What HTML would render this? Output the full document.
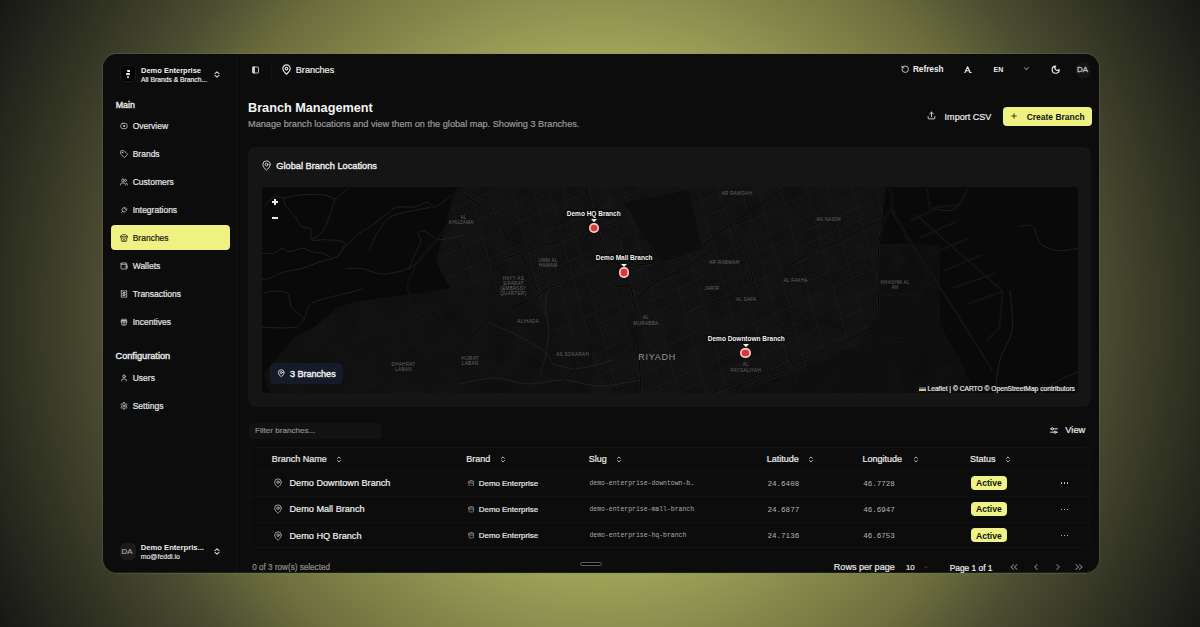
<!DOCTYPE html>
<html><head><meta charset="utf-8"><title>Branch Management</title>
<style>
html,body{margin:0;padding:0;width:1200px;height:627px;overflow:hidden}
body{position:relative;font-family:"Liberation Sans",sans-serif;
background:radial-gradient(circle at 600px 313px, #a3a95b 0px, #9ea458 260px, #8d904f 313px, #6c6e3d 420px, #4a4b30 500px, #2c2e20 600px, #161615 680px);}
.b{position:absolute;display:block}
.t{position:absolute;white-space:nowrap;-webkit-text-stroke:0.2px currentColor}
#win{position:absolute;left:103px;top:54px;width:996px;height:518.5px;border-radius:14px;overflow:hidden;background:#0c0c0c;box-shadow:0 0 0 1px rgba(130,130,120,0.22)}
#inner{position:absolute;left:-103px;top:-54px;width:1200px;height:627px}
</style></head><body>
<div id="win"><div id="inner">
<div class="b" style="left:103px;top:54px;width:996px;height:518px;background:#0c0c0c;border-radius:14px;box-shadow:0 0 0 1px rgba(90,90,60,0.25);overflow:hidden"></div>
<div class="b" style="left:236px;top:54px;width:1px;height:518px;background:#151515"></div>
<div class="b" style="left:120.5px;top:65.5px;width:14.699999999999989px;height:15.099999999999994px;background:#030303;border-radius:4px;box-shadow:0 0 0 1px #191919"></div>
<div class="b" style="left:126.8px;top:69.9px;width:3.700000000000003px;height:2.0999999999999943px;background:#f2f2f2;border-radius:1px 0.6px 0.6px 1.4px"></div>
<div class="b" style="left:125.5px;top:73px;width:4.800000000000011px;height:2.200000000000003px;background:#f2f2f2;border-radius:0.8px"></div>
<div class="b" style="left:126.5px;top:76.2px;width:2.1999999999999886px;height:2.200000000000003px;background:#f2f2f2;border-radius:50%"></div>
<div class="t" style="left:141.00px;top:67.25px;font-size:7.5px;line-height:7.5px;color:#f0f0f0;font-weight:bold;font-family:'Liberation Sans';-webkit-text-stroke:0;">Demo Enterprise</div>
<div class="t" style="left:141.00px;top:76.69px;font-size:6.75px;line-height:6.75px;color:#e6e6e6;font-weight:normal;font-family:'Liberation Sans';">All Brands &amp; Branch...</div>
<svg class="b" style="left:213.7px;top:71px;" width="6" height="7" viewBox="0 0 6 7" fill="none" stroke="#d6d6d6" stroke-width="1.1" stroke-linecap="round" stroke-linejoin="round"><path d="M1 2.6 L3 0.8 L5 2.6 M1 4.4 L3 6.2 L5 4.4"/></svg>
<div class="t" style="left:115.70px;top:100.77px;font-size:8.9px;line-height:8.9px;color:#e6e6e6;font-weight:normal;font-family:'Liberation Sans';-webkit-text-stroke:0.4px #e6e6e6">Main</div>
<svg class="b" style="left:119.5px;top:122.30000000000001px;" width="8" height="8" viewBox="0 0 24 24" fill="none" stroke="#d8d8d8" stroke-width="2.2" stroke-linecap="round" stroke-linejoin="round"><rect x="2.5" y="4" width="19" height="16" rx="6"/><circle cx="12.5" cy="12" r="3" fill="#d8d8d8" stroke="none"/></svg>
<div class="t" style="left:132.70px;top:122.30px;font-size:8.5px;line-height:8.5px;color:#e6e6e6;font-weight:normal;font-family:'Liberation Sans';">Overview</div>
<svg class="b" style="left:119.5px;top:150.20000000000002px;" width="8" height="8" viewBox="0 0 24 24" fill="none" stroke="#d8d8d8" stroke-width="2.2" stroke-linecap="round" stroke-linejoin="round"><path d="M12.6 2.6A2 2 0 0 0 11.2 2H4a2 2 0 0 0-2 2v7.2a2 2 0 0 0 .6 1.4l8.7 8.7a2.4 2.4 0 0 0 3.4 0l6.6-6.6a2.4 2.4 0 0 0 0-3.4z"/><circle cx="7.5" cy="7.5" r="1"/></svg>
<div class="t" style="left:132.70px;top:150.20px;font-size:8.5px;line-height:8.5px;color:#e6e6e6;font-weight:normal;font-family:'Liberation Sans';">Brands</div>
<svg class="b" style="left:119.5px;top:178.1px;" width="8" height="8" viewBox="0 0 24 24" fill="none" stroke="#d8d8d8" stroke-width="2.2" stroke-linecap="round" stroke-linejoin="round"><path d="M16 21v-2a4 4 0 0 0-4-4H6a4 4 0 0 0-4 4v2"/><circle cx="9" cy="7" r="4"/><path d="M22 21v-2a4 4 0 0 0-3-3.9"/><path d="M16 3.1a4 4 0 0 1 0 7.8"/></svg>
<div class="t" style="left:132.70px;top:178.10px;font-size:8.5px;line-height:8.5px;color:#e6e6e6;font-weight:normal;font-family:'Liberation Sans';">Customers</div>
<svg class="b" style="left:119.5px;top:206.0px;" width="8" height="8" viewBox="0 0 24 24" fill="none" stroke="#d8d8d8" stroke-width="2.2" stroke-linecap="round" stroke-linejoin="round"><g transform="rotate(45 12 12)"><path d="M12 22v-5"/><path d="M9 8V3"/><path d="M15 8V3"/><path d="M18 8v5a4 4 0 0 1-4 4h-4a4 4 0 0 1-4-4V8Z"/></g></svg>
<div class="t" style="left:132.70px;top:206.00px;font-size:8.5px;line-height:8.5px;color:#e6e6e6;font-weight:normal;font-family:'Liberation Sans';">Integrations</div>
<div class="b" style="left:111px;top:225px;width:119px;height:25px;background:#eff183;border-radius:4px"></div>
<svg class="b" style="left:119.5px;top:233.9px;" width="8" height="8" viewBox="0 0 24 24" fill="none" stroke="#2a2a18" stroke-width="2.2" stroke-linecap="round" stroke-linejoin="round"><path d="m2 7 4.4-4.4A2 2 0 0 1 7.8 2h8.4a2 2 0 0 1 1.4.6L22 7"/><path d="M4 12v8a2 2 0 0 0 2 2h12a2 2 0 0 0 2-2v-8"/><path d="M15 22v-4a2 2 0 0 0-2-2h-2a2 2 0 0 0-2 2v4"/><path d="M2 7h20"/><path d="M22 7v3a2 2 0 0 1-2 2a2.7 2.7 0 0 1-1.6-.6.7.7 0 0 0-.8 0A2.7 2.7 0 0 1 16 12a2.7 2.7 0 0 1-1.6-.6.7.7 0 0 0-.8 0A2.7 2.7 0 0 1 12 12a2.7 2.7 0 0 1-1.6-.6.7.7 0 0 0-.8 0A2.7 2.7 0 0 1 8 12a2.7 2.7 0 0 1-1.6-.6.7.7 0 0 0-.8 0A2.7 2.7 0 0 1 4 12a2 2 0 0 1-2-2V7"/></svg>
<div class="t" style="left:132.70px;top:233.90px;font-size:8.5px;line-height:8.5px;color:#1a1a10;font-weight:normal;font-family:'Liberation Sans';">Branches</div>
<svg class="b" style="left:119.5px;top:261.79999999999995px;" width="8" height="8" viewBox="0 0 24 24" fill="none" stroke="#d8d8d8" stroke-width="2.2" stroke-linecap="round" stroke-linejoin="round"><path d="M19 7V4a1 1 0 0 0-1-1H5a2 2 0 0 0 0 4h15a1 1 0 0 1 1 1v4h-3a2 2 0 0 0 0 4h3a1 1 0 0 0 1-1v-2a1 1 0 0 0-1-1"/><path d="M3 5v14a2 2 0 0 0 2 2h15a1 1 0 0 0 1-1v-4"/></svg>
<div class="t" style="left:132.70px;top:261.80px;font-size:8.5px;line-height:8.5px;color:#e6e6e6;font-weight:normal;font-family:'Liberation Sans';">Wallets</div>
<svg class="b" style="left:119.5px;top:289.69999999999993px;" width="8" height="8" viewBox="0 0 24 24" fill="none" stroke="#d8d8d8" stroke-width="2.2" stroke-linecap="round" stroke-linejoin="round"><path d="M4 2v20l2-1 2 1 2-1 2 1 2-1 2 1 2-1 2 1V2l-2 1-2-1-2 1-2-1-2 1-2-1-2 1Z"/><path d="M16 8h-6a2 2 0 1 0 0 4h4a2 2 0 1 1 0 4H8"/><path d="M12 17.5v-11"/></svg>
<div class="t" style="left:132.70px;top:289.70px;font-size:8.5px;line-height:8.5px;color:#e6e6e6;font-weight:normal;font-family:'Liberation Sans';">Transactions</div>
<svg class="b" style="left:119.5px;top:317.59999999999997px;" width="8" height="8" viewBox="0 0 24 24" fill="none" stroke="#d8d8d8" stroke-width="2.2" stroke-linecap="round" stroke-linejoin="round"><rect x="3" y="8" width="18" height="4" rx="1"/><path d="M12 8v13"/><path d="M19 12v7a2 2 0 0 1-2 2H7a2 2 0 0 1-2-2v-7"/><path d="M7.5 8a2.5 2.5 0 0 1 0-5A4.8 8 0 0 1 12 8a4.8 8 0 0 1 4.5-5 2.5 2.5 0 0 1 0 5"/></svg>
<div class="t" style="left:132.70px;top:317.60px;font-size:8.5px;line-height:8.5px;color:#e6e6e6;font-weight:normal;font-family:'Liberation Sans';">Incentives</div>
<div class="t" style="left:115.50px;top:352.01px;font-size:9.2px;line-height:9.2px;color:#e6e6e6;font-weight:normal;font-family:'Liberation Sans';-webkit-text-stroke:0.4px #e6e6e6">Configuration</div>
<svg class="b" style="left:119.5px;top:373.59999999999997px;" width="8" height="8" viewBox="0 0 24 24" fill="none" stroke="#d8d8d8" stroke-width="2.2" stroke-linecap="round" stroke-linejoin="round"><path d="M19 21v-2a4 4 0 0 0-4-4H9a4 4 0 0 0-4 4v2"/><circle cx="12" cy="7" r="4"/></svg>
<div class="t" style="left:132.70px;top:373.60px;font-size:8.5px;line-height:8.5px;color:#e6e6e6;font-weight:normal;font-family:'Liberation Sans';">Users</div>
<svg class="b" style="left:119.5px;top:401.59999999999997px;" width="8" height="8" viewBox="0 0 24 24" fill="none" stroke="#d8d8d8" stroke-width="2.2" stroke-linecap="round" stroke-linejoin="round"><path d="M12.22 2h-.44a2 2 0 0 0-2 2v.18a2 2 0 0 1-1 1.73l-.43.25a2 2 0 0 1-2 0l-.15-.08a2 2 0 0 0-2.73.73l-.22.38a2 2 0 0 0 .73 2.73l.15.1a2 2 0 0 1 1 1.72v.51a2 2 0 0 1-1 1.74l-.15.09a2 2 0 0 0-.73 2.73l.22.38a2 2 0 0 0 2.73.73l.15-.08a2 2 0 0 1 2 0l.43.25a2 2 0 0 1 1 1.73V20a2 2 0 0 0 2 2h.44a2 2 0 0 0 2-2v-.18a2 2 0 0 1 1-1.73l.43-.25a2 2 0 0 1 2 0l.15.08a2 2 0 0 0 2.73-.73l.22-.39a2 2 0 0 0-.73-2.73l-.15-.08a2 2 0 0 1-1-1.74v-.5a2 2 0 0 1 1-1.74l.15-.09a2 2 0 0 0 .73-2.73l-.22-.38a2 2 0 0 0-2.73-.73l-.15.08a2 2 0 0 1-2 0l-.43-.25a2 2 0 0 1-1-1.73V4a2 2 0 0 0-2-2z"/><circle cx="12" cy="12" r="3"/></svg>
<div class="t" style="left:132.70px;top:401.60px;font-size:8.5px;line-height:8.5px;color:#e6e6e6;font-weight:normal;font-family:'Liberation Sans';">Settings</div>
<div class="b" style="left:120px;top:543px;width:16px;height:17px;background:#1a1a1a;border-radius:5px"></div>
<div class="t" style="left:121.50px;top:548.41px;font-size:7.9px;line-height:7.9px;color:#a8a8a8;font-weight:normal;font-family:'Liberation Sans';">DA</div>
<div class="t" style="left:140.70px;top:544.42px;font-size:7.65px;line-height:7.65px;color:#ededed;font-weight:bold;font-family:'Liberation Sans';-webkit-text-stroke:0;">Demo Enterpris...</div>
<div class="t" style="left:140.70px;top:553.39px;font-size:6.98px;line-height:6.98px;color:#e0e0e0;font-weight:normal;font-family:'Liberation Sans';-webkit-text-stroke:0.15px #e0e0e0">mo@feddi.io</div>
<svg class="b" style="left:213.7px;top:548px;" width="6" height="7" viewBox="0 0 6 7" fill="none" stroke="#d6d6d6" stroke-width="1.1" stroke-linecap="round" stroke-linejoin="round"><path d="M1 2.6 L3 0.8 L5 2.6 M1 4.4 L3 6.2 L5 4.4"/></svg>
<svg class="b" style="left:250.5px;top:65.5px;" width="9" height="8" viewBox="0 0 24 24" fill="none" stroke="#d8d8d8" stroke-width="2.6" stroke-linecap="round" stroke-linejoin="round"><rect x="3" y="3" width="18" height="18" rx="2"/><path d="M9 3v18"/><rect x="3" y="3" width="6" height="18" fill="#cfcfcf" stroke="none"/></svg>
<div class="b" style="left:271px;top:63px;width:1px;height:16px;background:#151515"></div>
<svg class="b" style="left:280.5px;top:63.8px;" width="11" height="11" viewBox="0 0 24 24" fill="none" stroke="#e8e8e8" stroke-width="2.4" stroke-linecap="round" stroke-linejoin="round"><path d="M20 10c0 4.99-5.54 10.19-7.4 11.8a1 1 0 0 1-1.2 0C9.54 20.19 4 14.99 4 10a8 8 0 0 1 16 0"/><circle cx="12" cy="10" r="3"/></svg>
<div class="t" style="left:295.80px;top:65.90px;font-size:9.1px;line-height:9.1px;color:#ececec;font-weight:normal;font-family:'Liberation Sans';">Branches</div>
<svg class="b" style="left:900.5px;top:65.3px;" width="8.5" height="8.5" viewBox="0 0 24 24" fill="none" stroke="#e0e0e0" stroke-width="2.4" stroke-linecap="round" stroke-linejoin="round"><path d="M3 12a9 9 0 1 0 9-9 9.75 9.75 0 0 0-6.74 2.74L3 8"/><path d="M3 3v5h5"/></svg>
<div class="t" style="left:912.90px;top:66.02px;font-size:8.24px;line-height:8.24px;color:#f0f0f0;font-weight:bold;font-family:'Liberation Sans';-webkit-text-stroke:0;">Refresh</div>
<svg class="b" style="left:964.2px;top:65.6px;" width="8" height="7.6" viewBox="0 0 8 7.6" fill="none" stroke="#ececec" stroke-width="1.1" stroke-linecap="round" stroke-linejoin="round"><path d="M0.8 7 L3.6 0.7 L6.4 7"/><path d="M1.9 4.7 H5.3"/><path d="M5.6 6.9 H7.4"/></svg>
<div class="t" style="left:993.60px;top:66.27px;font-size:7.0px;line-height:7.0px;color:#ececec;font-weight:bold;font-family:'Liberation Sans';-webkit-text-stroke:0;">EN</div>
<svg class="b" style="left:1024px;top:67.2px;" width="5" height="3.6" viewBox="0 0 5 3.6" fill="none" stroke="#7a7a7a" stroke-width="1.1" stroke-linecap="round" stroke-linejoin="round"><path d="M0.6 0.6 L2.5 2.7 L4.4 0.6"/></svg>
<svg class="b" style="left:1051.2px;top:64.8px;" width="9.4" height="9.4" viewBox="0 0 24 24" fill="none" stroke="#e8e8e8" stroke-width="3" stroke-linecap="round" stroke-linejoin="round"><path d="M12 3a6 6 0 0 0 9 9 9 9 0 1 1-9-9Z"/></svg>
<div class="b" style="left:1074.5px;top:61.5px;width:16.5px;height:17.0px;background:#151515;border-radius:50%"></div>
<div class="t" style="left:1077.00px;top:65.71px;font-size:7.9px;line-height:7.9px;color:#c4c4c4;font-weight:normal;font-family:'Liberation Sans';-webkit-text-stroke:0.3px #c4c4c4">DA</div>
<div class="t" style="left:248.00px;top:102.35px;font-size:12.7px;line-height:12.7px;color:#f4f4f4;font-weight:bold;font-family:'Liberation Sans';-webkit-text-stroke:0;">Branch Management</div>
<div class="t" style="left:248.00px;top:120.02px;font-size:9.19px;line-height:9.19px;color:#9a9a9a;font-weight:normal;font-family:'Liberation Sans';">Manage branch locations and view them on the global map. Showing 3 Branches.</div>
<svg class="b" style="left:927px;top:111px;" width="9" height="9" viewBox="0 0 24 24" fill="none" stroke="#e0e0e0" stroke-width="2.4" stroke-linecap="round" stroke-linejoin="round"><path d="M12 3v12"/><path d="m17 8-5-5-5 5"/><path d="M21 15v4a2 2 0 0 1-2 2H5a2 2 0 0 1-2-2v-4"/></svg>
<div class="t" style="left:944.60px;top:112.95px;font-size:9.04px;line-height:9.04px;color:#ececec;font-weight:normal;font-family:'Liberation Sans';">Import CSV</div>
<div class="b" style="left:1003px;top:107px;width:89px;height:19px;background:#eff183;border-radius:4px"></div>
<svg class="b" style="left:1009.5px;top:112px;" width="8" height="8" viewBox="0 0 24 24" fill="none" stroke="#1a1a10" stroke-width="2.4" stroke-linecap="round" stroke-linejoin="round"><path d="M5 12h14"/><path d="M12 5v14"/></svg>
<div class="t" style="left:1026.70px;top:113.42px;font-size:8.48px;line-height:8.48px;color:#141410;font-weight:bold;font-family:'Liberation Sans';-webkit-text-stroke:0;">Create Branch</div>
<div class="b" style="left:248px;top:147px;width:843px;height:259.5px;background:#151515;border-radius:8px"></div>
<svg class="b" style="left:261px;top:160px;" width="11" height="11" viewBox="0 0 24 24" fill="none" stroke="#e0e0e0" stroke-width="2" stroke-linecap="round" stroke-linejoin="round"><path d="M20 10c0 4.99-5.54 10.19-7.4 11.8a1 1 0 0 1-1.2 0C9.54 20.19 4 14.99 4 10a8 8 0 0 1 16 0"/><circle cx="12" cy="10" r="3"/></svg>
<div class="t" style="left:276.30px;top:161.98px;font-size:9.24px;line-height:9.24px;color:#f0f0f0;font-weight:normal;font-family:'Liberation Sans';-webkit-text-stroke:0.35px #f0f0f0">Global Branch Locations</div>
<svg class="b" style="left:0;top:0" width="1200" height="627" viewBox="0 0 1200 627"><defs><clipPath id="core"><path d="M462.0 187.0 L886.0 187.0 L880.0 236.0 L878.0 315.0 L860.0 344.0 L800.0 370.0 L740.0 393.0 L590.0 393.0 L592.0 345.0 L555.0 332.0 L535.0 305.0 L505.0 292.0 L450.0 288.0 L436.0 262.0 L446.0 226.0 L453.0 199.0 Z"/></clipPath><clipPath id="band"><path d="M264.0 374.0 L275.4 359.7 L294.2 337.5 L316.4 325.6 L338.6 306.8 L355.7 301.7 L379.6 298.2 L408.6 294.8 L450.0 288.0 L505.0 292.0 L535.0 305.0 L555.0 332.0 L592.0 345.0 L590.0 393.0 L270.0 393.0 Z"/></clipPath><clipPath id="mapc"><rect x="262" y="187" width="816" height="206" rx="4"/></clipPath><filter id="bl" x="-50%" y="-50%" width="200%" height="200%"><feGaussianBlur stdDeviation="2"/></filter></defs><g clip-path="url(#mapc)"><rect x="262" y="187" width="816" height="206" fill="#090909"/><path d="M264.0 374.0 L275.4 359.7 L294.2 337.5 L316.4 325.6 L338.6 306.8 L355.7 301.7 L379.6 298.2 L408.6 294.8 L450.0 288.0 L505.0 292.0 L535.0 305.0 L555.0 332.0 L592.0 345.0 L590.0 393.0 L270.0 393.0 Z" fill="#101010"/><clipPath id="rg"><path d="M878.0 245.0 L940.0 245.0 L940.0 325.0 L960.0 360.0 L975.0 393.0 L740.0 393.0 L800.0 370.0 L860.0 344.0 L870.0 325.0 Z"/></clipPath><path d="M462.0 187.0 L886.0 187.0 L880.0 236.0 L878.0 315.0 L860.0 344.0 L800.0 370.0 L740.0 393.0 L590.0 393.0 L592.0 345.0 L555.0 332.0 L535.0 305.0 L505.0 292.0 L450.0 288.0 L436.0 262.0 L446.0 226.0 L453.0 199.0 Z" fill="#131313"/><filter id="nz" x="0" y="0" width="100%" height="100%" color-interpolation-filters="sRGB"><feTurbulence type="fractalNoise" baseFrequency="0.9" numOctaves="2" seed="5" result="n1"/><feTurbulence type="fractalNoise" baseFrequency="0.045" numOctaves="2" seed="11" result="n2"/><feComposite in="n1" in2="n2" operator="arithmetic" k1="0" k2="0.55" k3="0.45" k4="0"/><feColorMatrix type="matrix" values="0.075 0 0 0 0.028  0.075 0 0 0 0.028  0.075 0 0 0 0.028  0 0 0 0 1"/></filter><g clip-path="url(#core)"><rect x="262" y="187" width="816" height="206" filter="url(#nz)"/></g><g clip-path="url(#band)" opacity="0.85"><rect x="262" y="187" width="816" height="206" filter="url(#nz)"/></g><g clip-path="url(#rg)" opacity="0.8"><rect x="262" y="187" width="816" height="206" filter="url(#nz)"/></g><path clip-path="url(#rg)" d="M262 -53.0L1078 -54.4M262 -49.0L1078 -50.4M262 -45.0L1078 -46.4M262 -41.0L1078 -42.4M262 -37.0L1078 -38.4M262 -33.0L1078 -34.4M262 -29.0L1078 -30.4M262 -25.0L1078 -26.4M262 -21.0L1078 -22.4M262 -17.0L1078 -18.4M262 -13.0L1078 -14.4M262 -9.0L1078 -10.4M262 -5.0L1078 -6.4M262 -1.0L1078 -2.4M262 3.0L1078 1.6M262 7.0L1078 5.6M262 11.0L1078 9.6M262 15.0L1078 13.6M262 19.0L1078 17.6M262 23.0L1078 21.6M262 27.0L1078 25.6M262 31.0L1078 29.6M262 35.0L1078 33.6M262 39.0L1078 37.6M262 43.0L1078 41.6M262 47.0L1078 45.6M262 51.0L1078 49.6M262 55.0L1078 53.6M262 59.0L1078 57.6M262 63.0L1078 61.6M262 67.0L1078 65.6M262 71.0L1078 69.6M262 75.0L1078 73.6M262 79.0L1078 77.6M262 83.0L1078 81.6M262 87.0L1078 85.6M262 91.0L1078 89.6M262 95.0L1078 93.6M262 99.0L1078 97.6M262 103.0L1078 101.6M262 107.0L1078 105.6M262 111.0L1078 109.6M262 115.0L1078 113.6M262 119.0L1078 117.6M262 123.0L1078 121.6M262 127.0L1078 125.6M262 131.0L1078 129.6M262 135.0L1078 133.6M262 139.0L1078 137.6M262 143.0L1078 141.6M262 147.0L1078 145.6M262 151.0L1078 149.6M262 155.0L1078 153.6M262 159.0L1078 157.6M262 163.0L1078 161.6M262 167.0L1078 165.6M262 171.0L1078 169.6M262 175.0L1078 173.6M262 179.0L1078 177.6M262 183.0L1078 181.6M262 187.0L1078 185.6M262 191.0L1078 189.6M262 195.0L1078 193.6M262 199.0L1078 197.6M262 203.0L1078 201.6M262 207.0L1078 205.6M262 211.0L1078 209.6M262 215.0L1078 213.6M262 219.0L1078 217.6M262 223.0L1078 221.6M262 227.0L1078 225.6M262 231.0L1078 229.6M262 235.0L1078 233.6M262 239.0L1078 237.6M262 243.0L1078 241.6M262 247.0L1078 245.6M262 251.0L1078 249.6M262 255.0L1078 253.6M262 259.0L1078 257.6M262 263.0L1078 261.6M262 267.0L1078 265.6M262 271.0L1078 269.6M262 275.0L1078 273.6M262 279.0L1078 277.6M262 283.0L1078 281.6M262 287.0L1078 285.6M262 291.0L1078 289.6M262 295.0L1078 293.6M262 299.0L1078 297.6M262 303.0L1078 301.6M262 307.0L1078 305.6M262 311.0L1078 309.6M262 315.0L1078 313.6M262 319.0L1078 317.6M262 323.0L1078 321.6M262 327.0L1078 325.6M262 331.0L1078 329.6M262 335.0L1078 333.6M262 339.0L1078 337.6M262 343.0L1078 341.6M262 347.0L1078 345.6M262 351.0L1078 349.6M262 355.0L1078 353.6M262 359.0L1078 357.6M262 363.0L1078 361.6M262 367.0L1078 365.6M262 371.0L1078 369.6M262 375.0L1078 373.6M262 379.0L1078 377.6M262 383.0L1078 381.6M262 387.0L1078 385.6M262 391.0L1078 389.6M262 395.0L1078 393.6M262 399.0L1078 397.6M262 403.0L1078 401.6M262 407.0L1078 405.6M262 411.0L1078 409.6M262 415.0L1078 413.6M262 419.0L1078 417.6M262 423.0L1078 421.6M262 427.0L1078 425.6M262 431.0L1078 429.6M262 435.0L1078 433.6M262 439.0L1078 437.6M262 443.0L1078 441.6M262 447.0L1078 445.6M262 451.0L1078 449.6M262 455.0L1078 453.6M262 459.0L1078 457.6M262 463.0L1078 461.6M262 467.0L1078 465.6M262 471.0L1078 469.6M262 475.0L1078 473.6M262 479.0L1078 477.6M262 483.0L1078 481.6M262 487.0L1078 485.6M262 491.0L1078 489.6M262 495.0L1078 493.6M262 499.0L1078 497.6M262 503.0L1078 501.6M262 507.0L1078 505.6M262 511.0L1078 509.6M262 515.0L1078 513.6M262 519.0L1078 517.6M262 523.0L1078 521.6M262 527.0L1078 525.6M262 531.0L1078 529.6M262 535.0L1078 533.6M262 539.0L1078 537.6M262 543.0L1078 541.6M262 547.0L1078 545.6M262 551.0L1078 549.6M262 555.0L1078 553.6M262 559.0L1078 557.6M262 563.0L1078 561.6M262 567.0L1078 565.6M262 571.0L1078 569.6M262 575.0L1078 573.6M262 579.0L1078 577.6M262 583.0L1078 581.6M262 587.0L1078 585.6M262 591.0L1078 589.6M262 595.0L1078 593.6M262 599.0L1078 597.6M262 603.0L1078 601.6M262 607.0L1078 605.6M262 611.0L1078 609.6M262 615.0L1078 613.6M262 619.0L1078 617.6M262 623.0L1078 621.6M262 627.0L1078 625.6M262 631.0L1078 629.6M262 635.0L1078 633.6M262 639.0L1078 637.6M262 643.0L1078 641.6M262 647.0L1078 645.6M262 651.0L1078 649.6M262 655.0L1078 653.6M262 659.0L1078 657.6M262 663.0L1078 661.6M262 667.0L1078 665.6M262 671.0L1078 669.6M262 675.0L1078 673.6M262 679.0L1078 677.6M262 683.0L1078 681.6M262 687.0L1078 685.6M262 691.0L1078 689.6M262 695.0L1078 693.6M262 699.0L1078 697.6M262 703.0L1078 701.6M262 707.0L1078 705.6M262 711.0L1078 709.6M262 715.0L1078 713.6M262 719.0L1078 717.6M262 723.0L1078 721.6M262 727.0L1078 725.6M262 731.0L1078 729.6M262 735.0L1078 733.6M262 739.0L1078 737.6M262 743.0L1078 741.6M102.0 187L102.4 393M106.0 187L106.4 393M110.0 187L110.4 393M114.0 187L114.4 393M118.0 187L118.4 393M122.0 187L122.4 393M126.0 187L126.4 393M130.0 187L130.4 393M134.0 187L134.4 393M138.0 187L138.4 393M142.0 187L142.4 393M146.0 187L146.4 393M150.0 187L150.4 393M154.0 187L154.4 393M158.0 187L158.4 393M162.0 187L162.4 393M166.0 187L166.4 393M170.0 187L170.4 393M174.0 187L174.4 393M178.0 187L178.4 393M182.0 187L182.4 393M186.0 187L186.4 393M190.0 187L190.4 393M194.0 187L194.4 393M198.0 187L198.4 393M202.0 187L202.4 393M206.0 187L206.4 393M210.0 187L210.4 393M214.0 187L214.4 393M218.0 187L218.4 393M222.0 187L222.4 393M226.0 187L226.4 393M230.0 187L230.4 393M234.0 187L234.4 393M238.0 187L238.4 393M242.0 187L242.4 393M246.0 187L246.4 393M250.0 187L250.4 393M254.0 187L254.4 393M258.0 187L258.4 393M262.0 187L262.4 393M266.0 187L266.4 393M270.0 187L270.4 393M274.0 187L274.4 393M278.0 187L278.4 393M282.0 187L282.4 393M286.0 187L286.4 393M290.0 187L290.4 393M294.0 187L294.4 393M298.0 187L298.4 393M302.0 187L302.4 393M306.0 187L306.4 393M310.0 187L310.4 393M314.0 187L314.4 393M318.0 187L318.4 393M322.0 187L322.4 393M326.0 187L326.4 393M330.0 187L330.4 393M334.0 187L334.4 393M338.0 187L338.4 393M342.0 187L342.4 393M346.0 187L346.4 393M350.0 187L350.4 393M354.0 187L354.4 393M358.0 187L358.4 393M362.0 187L362.4 393M366.0 187L366.4 393M370.0 187L370.4 393M374.0 187L374.4 393M378.0 187L378.4 393M382.0 187L382.4 393M386.0 187L386.4 393M390.0 187L390.4 393M394.0 187L394.4 393M398.0 187L398.4 393M402.0 187L402.4 393M406.0 187L406.4 393M410.0 187L410.4 393M414.0 187L414.4 393M418.0 187L418.4 393M422.0 187L422.4 393M426.0 187L426.4 393M430.0 187L430.4 393M434.0 187L434.4 393M438.0 187L438.4 393M442.0 187L442.4 393M446.0 187L446.4 393M450.0 187L450.4 393M454.0 187L454.4 393M458.0 187L458.4 393M462.0 187L462.4 393M466.0 187L466.4 393M470.0 187L470.4 393M474.0 187L474.4 393M478.0 187L478.4 393M482.0 187L482.4 393M486.0 187L486.4 393M490.0 187L490.4 393M494.0 187L494.4 393M498.0 187L498.4 393M502.0 187L502.4 393M506.0 187L506.4 393M510.0 187L510.4 393M514.0 187L514.4 393M518.0 187L518.4 393M522.0 187L522.4 393M526.0 187L526.4 393M530.0 187L530.4 393M534.0 187L534.4 393M538.0 187L538.4 393M542.0 187L542.4 393M546.0 187L546.4 393M550.0 187L550.4 393M554.0 187L554.4 393M558.0 187L558.4 393M562.0 187L562.4 393M566.0 187L566.4 393M570.0 187L570.4 393M574.0 187L574.4 393M578.0 187L578.4 393M582.0 187L582.4 393M586.0 187L586.4 393M590.0 187L590.4 393M594.0 187L594.4 393M598.0 187L598.4 393M602.0 187L602.4 393M606.0 187L606.4 393M610.0 187L610.4 393M614.0 187L614.4 393M618.0 187L618.4 393M622.0 187L622.4 393M626.0 187L626.4 393M630.0 187L630.4 393M634.0 187L634.4 393M638.0 187L638.4 393M642.0 187L642.4 393M646.0 187L646.4 393M650.0 187L650.4 393M654.0 187L654.4 393M658.0 187L658.4 393M662.0 187L662.4 393M666.0 187L666.4 393M670.0 187L670.4 393M674.0 187L674.4 393M678.0 187L678.4 393M682.0 187L682.4 393M686.0 187L686.4 393M690.0 187L690.4 393M694.0 187L694.4 393M698.0 187L698.4 393M702.0 187L702.4 393M706.0 187L706.4 393M710.0 187L710.4 393M714.0 187L714.4 393M718.0 187L718.4 393M722.0 187L722.4 393M726.0 187L726.4 393M730.0 187L730.4 393M734.0 187L734.4 393M738.0 187L738.4 393M742.0 187L742.4 393M746.0 187L746.4 393M750.0 187L750.4 393M754.0 187L754.4 393M758.0 187L758.4 393M762.0 187L762.4 393M766.0 187L766.4 393M770.0 187L770.4 393M774.0 187L774.4 393M778.0 187L778.4 393M782.0 187L782.4 393M786.0 187L786.4 393M790.0 187L790.4 393M794.0 187L794.4 393M798.0 187L798.4 393M802.0 187L802.4 393M806.0 187L806.4 393M810.0 187L810.4 393M814.0 187L814.4 393M818.0 187L818.4 393M822.0 187L822.4 393M826.0 187L826.4 393M830.0 187L830.4 393M834.0 187L834.4 393M838.0 187L838.4 393M842.0 187L842.4 393M846.0 187L846.4 393M850.0 187L850.4 393M854.0 187L854.4 393M858.0 187L858.4 393M862.0 187L862.4 393M866.0 187L866.4 393M870.0 187L870.4 393M874.0 187L874.4 393M878.0 187L878.4 393M882.0 187L882.4 393M886.0 187L886.4 393M890.0 187L890.4 393M894.0 187L894.4 393M898.0 187L898.4 393" stroke="#161616" stroke-width="0.45" fill="none"/><path clip-path="url(#core)" d="M262 -65.0L1078 -346.0M262 -60.8L1078 -341.8M262 -56.6L1078 -337.6M262 -52.4L1078 -333.4M262 -48.2L1078 -329.2M262 -44.0L1078 -325.0M262 -39.8L1078 -320.8M262 -35.6L1078 -316.6M262 -31.4L1078 -312.4M262 -27.2L1078 -308.2M262 -23.0L1078 -304.0M262 -18.8L1078 -299.8M262 -14.6L1078 -295.6M262 -10.4L1078 -291.4M262 -6.2L1078 -287.2M262 -2.0L1078 -283.0M262 2.2L1078 -278.8M262 6.4L1078 -274.6M262 10.6L1078 -270.4M262 14.8L1078 -266.2M262 19.0L1078 -262.0M262 23.2L1078 -257.8M262 27.4L1078 -253.6M262 31.6L1078 -249.4M262 35.8L1078 -245.2M262 40.0L1078 -241.0M262 44.2L1078 -236.8M262 48.4L1078 -232.6M262 52.6L1078 -228.4M262 56.8L1078 -224.2M262 61.0L1078 -220.0M262 65.2L1078 -215.8M262 69.4L1078 -211.6M262 73.6L1078 -207.4M262 77.8L1078 -203.2M262 82.0L1078 -199.0M262 86.2L1078 -194.8M262 90.4L1078 -190.6M262 94.6L1078 -186.4M262 98.8L1078 -182.2M262 103.0L1078 -178.0M262 107.2L1078 -173.8M262 111.4L1078 -169.6M262 115.6L1078 -165.4M262 119.8L1078 -161.2M262 124.0L1078 -157.0M262 128.2L1078 -152.8M262 132.4L1078 -148.6M262 136.6L1078 -144.4M262 140.8L1078 -140.2M262 145.0L1078 -136.0M262 149.2L1078 -131.8M262 153.4L1078 -127.6M262 157.6L1078 -123.4M262 161.8L1078 -119.2M262 166.0L1078 -115.0M262 170.2L1078 -110.8M262 174.4L1078 -106.6M262 178.6L1078 -102.4M262 182.8L1078 -98.2M262 187.0L1078 -94.0M262 191.2L1078 -89.8M262 195.4L1078 -85.6M262 199.6L1078 -81.4M262 203.8L1078 -77.2M262 208.0L1078 -73.0M262 212.2L1078 -68.8M262 216.4L1078 -64.6M262 220.6L1078 -60.4M262 224.8L1078 -56.2M262 229.0L1078 -52.0M262 233.2L1078 -47.8M262 237.4L1078 -43.6M262 241.6L1078 -39.4M262 245.8L1078 -35.2M262 250.0L1078 -31.0M262 254.2L1078 -26.8M262 258.4L1078 -22.6M262 262.6L1078 -18.4M262 266.8L1078 -14.2M262 271.0L1078 -10.0M262 275.2L1078 -5.8M262 279.4L1078 -1.6M262 283.6L1078 2.6M262 287.8L1078 6.8M262 292.0L1078 11.0M262 296.2L1078 15.2M262 300.4L1078 19.4M262 304.6L1078 23.6M262 308.8L1078 27.8M262 313.0L1078 32.0M262 317.2L1078 36.2M262 321.4L1078 40.4M262 325.6L1078 44.6M262 329.8L1078 48.8M262 334.0L1078 53.0M262 338.2L1078 57.2M262 342.4L1078 61.4M262 346.6L1078 65.6M262 350.8L1078 69.8M262 355.0L1078 74.0M262 359.2L1078 78.2M262 363.4L1078 82.4M262 367.6L1078 86.6M262 371.8L1078 90.8M262 376.0L1078 95.0M262 380.2L1078 99.2M262 384.4L1078 103.4M262 388.6L1078 107.6M262 392.8L1078 111.8M262 397.0L1078 116.0M262 401.2L1078 120.2M262 405.4L1078 124.4M262 409.6L1078 128.6M262 413.8L1078 132.8M262 418.0L1078 137.0M262 422.2L1078 141.2M262 426.4L1078 145.4M262 430.6L1078 149.6M262 434.8L1078 153.8M262 439.0L1078 158.0M262 443.2L1078 162.2M262 447.4L1078 166.4M262 451.6L1078 170.6M262 455.8L1078 174.8M262 460.0L1078 179.0M262 464.2L1078 183.2M262 468.4L1078 187.4M262 472.6L1078 191.6M262 476.8L1078 195.8M262 481.0L1078 200.0M262 485.2L1078 204.2M262 489.4L1078 208.4M262 493.6L1078 212.6M262 497.8L1078 216.8M262 502.0L1078 221.0M262 506.2L1078 225.2M262 510.4L1078 229.4M262 514.6L1078 233.6M262 518.8L1078 237.8M262 523.0L1078 242.0M262 527.2L1078 246.2M262 531.4L1078 250.4M262 535.6L1078 254.6M262 539.8L1078 258.8M262 544.0L1078 263.0M262 548.2L1078 267.2M262 552.4L1078 271.4M262 556.6L1078 275.6M262 560.8L1078 279.8M262 565.0L1078 284.0M262 569.2L1078 288.2M262 573.4L1078 292.4M262 577.6L1078 296.6M262 581.8L1078 300.8M262 586.0L1078 305.0M262 590.2L1078 309.2M262 594.4L1078 313.4M262 598.6L1078 317.6M262 602.8L1078 321.8M262 607.0L1078 326.0M262 611.2L1078 330.2M262 615.4L1078 334.4M262 619.6L1078 338.6M262 623.8L1078 342.8M262 628.0L1078 347.0M262 632.2L1078 351.2M262 636.4L1078 355.4M262 640.6L1078 359.6M262 644.8L1078 363.8M262 649.0L1078 368.0M262 653.2L1078 372.2M262 657.4L1078 376.4M262 661.6L1078 380.6M262 665.8L1078 384.8M262 670.0L1078 389.0M262 674.2L1078 393.2M262 678.4L1078 397.4M262 682.6L1078 401.6M262 686.8L1078 405.8M262 691.0L1078 410.0M262 695.2L1078 414.2M262 699.4L1078 418.4M262 703.6L1078 422.6M262 707.8L1078 426.8M262 712.0L1078 431.0M262 716.2L1078 435.2M262 720.4L1078 439.4M262 724.6L1078 443.6M262 728.8L1078 447.8M262 733.0L1078 452.0M262 737.2L1078 456.2M262 741.4L1078 460.4M262 745.6L1078 464.6M262 749.8L1078 468.8M262 754.0L1078 473.0M262 758.2L1078 477.2M262 762.4L1078 481.4M262 766.6L1078 485.6M262 770.8L1078 489.8M94.0 187L164.9 393M98.2 187L169.1 393M102.4 187L173.3 393M106.6 187L177.5 393M110.8 187L181.7 393M115.0 187L185.9 393M119.2 187L190.1 393M123.4 187L194.3 393M127.6 187L198.5 393M131.8 187L202.7 393M136.0 187L206.9 393M140.2 187L211.1 393M144.4 187L215.3 393M148.6 187L219.5 393M152.8 187L223.7 393M157.0 187L227.9 393M161.2 187L232.1 393M165.4 187L236.3 393M169.6 187L240.5 393M173.8 187L244.7 393M178.0 187L248.9 393M182.2 187L253.1 393M186.4 187L257.3 393M190.6 187L261.5 393M194.8 187L265.7 393M199.0 187L269.9 393M203.2 187L274.1 393M207.4 187L278.3 393M211.6 187L282.5 393M215.8 187L286.7 393M220.0 187L290.9 393M224.2 187L295.1 393M228.4 187L299.3 393M232.6 187L303.5 393M236.8 187L307.7 393M241.0 187L311.9 393M245.2 187L316.1 393M249.4 187L320.3 393M253.6 187L324.5 393M257.8 187L328.7 393M262.0 187L332.9 393M266.2 187L337.1 393M270.4 187L341.3 393M274.6 187L345.5 393M278.8 187L349.7 393M283.0 187L353.9 393M287.2 187L358.1 393M291.4 187L362.3 393M295.6 187L366.5 393M299.8 187L370.7 393M304.0 187L374.9 393M308.2 187L379.1 393M312.4 187L383.3 393M316.6 187L387.5 393M320.8 187L391.7 393M325.0 187L395.9 393M329.2 187L400.1 393M333.4 187L404.3 393M337.6 187L408.5 393M341.8 187L412.7 393M346.0 187L416.9 393M350.2 187L421.1 393M354.4 187L425.3 393M358.6 187L429.5 393M362.8 187L433.7 393M367.0 187L437.9 393M371.2 187L442.1 393M375.4 187L446.3 393M379.6 187L450.5 393M383.8 187L454.7 393M388.0 187L458.9 393M392.2 187L463.1 393M396.4 187L467.3 393M400.6 187L471.5 393M404.8 187L475.7 393M409.0 187L479.9 393M413.2 187L484.1 393M417.4 187L488.3 393M421.6 187L492.5 393M425.8 187L496.7 393M430.0 187L500.9 393M434.2 187L505.1 393M438.4 187L509.3 393M442.6 187L513.5 393M446.8 187L517.7 393M451.0 187L521.9 393M455.2 187L526.1 393M459.4 187L530.3 393M463.6 187L534.5 393M467.8 187L538.7 393M472.0 187L542.9 393M476.2 187L547.1 393M480.4 187L551.3 393M484.6 187L555.5 393M488.8 187L559.7 393M493.0 187L563.9 393M497.2 187L568.1 393M501.4 187L572.3 393M505.6 187L576.5 393M509.8 187L580.7 393M514.0 187L584.9 393M518.2 187L589.1 393M522.4 187L593.3 393M526.6 187L597.5 393M530.8 187L601.7 393M535.0 187L605.9 393M539.2 187L610.1 393M543.4 187L614.3 393M547.6 187L618.5 393M551.8 187L622.7 393M556.0 187L626.9 393M560.2 187L631.1 393M564.4 187L635.3 393M568.6 187L639.5 393M572.8 187L643.7 393M577.0 187L647.9 393M581.2 187L652.1 393M585.4 187L656.3 393M589.6 187L660.5 393M593.8 187L664.7 393M598.0 187L668.9 393M602.2 187L673.1 393M606.4 187L677.3 393M610.6 187L681.5 393M614.8 187L685.7 393M619.0 187L689.9 393M623.2 187L694.1 393M627.4 187L698.3 393M631.6 187L702.5 393M635.8 187L706.7 393M640.0 187L710.9 393M644.2 187L715.1 393M648.4 187L719.3 393M652.6 187L723.5 393M656.8 187L727.7 393M661.0 187L731.9 393M665.2 187L736.1 393M669.4 187L740.3 393M673.6 187L744.5 393M677.8 187L748.7 393M682.0 187L752.9 393M686.2 187L757.1 393M690.4 187L761.3 393M694.6 187L765.5 393M698.8 187L769.7 393M703.0 187L773.9 393M707.2 187L778.1 393M711.4 187L782.3 393M715.6 187L786.5 393M719.8 187L790.7 393M724.0 187L794.9 393M728.2 187L799.1 393M732.4 187L803.3 393M736.6 187L807.5 393M740.8 187L811.7 393M745.0 187L815.9 393M749.2 187L820.1 393M753.4 187L824.3 393M757.6 187L828.5 393M761.8 187L832.7 393M766.0 187L836.9 393M770.2 187L841.1 393M774.4 187L845.3 393M778.6 187L849.5 393M782.8 187L853.7 393M787.0 187L857.9 393M791.2 187L862.1 393M795.4 187L866.3 393M799.6 187L870.5 393M803.8 187L874.7 393M808.0 187L878.9 393M812.2 187L883.1 393M816.4 187L887.3 393M820.6 187L891.5 393M824.8 187L895.7 393M829.0 187L899.9 393M833.2 187L904.1 393M837.4 187L908.3 393M841.6 187L912.5 393M845.8 187L916.7 393M850.0 187L920.9 393M854.2 187L925.1 393M858.4 187L929.3 393M862.6 187L933.5 393M866.8 187L937.7 393M871.0 187L941.9 393M875.2 187L946.1 393M879.4 187L950.3 393M883.6 187L954.5 393M887.8 187L958.7 393M892.0 187L962.9 393M896.2 187L967.1 393M900.4 187L971.3 393M904.6 187L975.5 393M908.8 187L979.7 393M913.0 187L983.9 393M917.2 187L988.1 393M921.4 187L992.3 393M925.6 187L996.5 393M929.8 187L1000.7 393" stroke="#191919" stroke-width="0.45" fill="none"/><path clip-path="url(#core)" d="M447.3 187L503.0 393M469.0 187L524.6 393M488.1 187L543.8 393M510.6 187L566.2 393M533.3 187L589.0 393M548.3 187L603.9 393M562.4 187L618.1 393M588.2 187L643.8 393M605.8 187L661.4 393M623.1 187L678.7 393M651.0 187L706.6 393M671.6 187L727.2 393M697.3 187L752.9 393M718.0 187L773.6 393M740.9 187L796.6 393M757.0 187L812.7 393M779.9 187L835.5 393M806.1 187L861.7 393M827.4 187L883.0 393M851.8 187L907.4 393M875.2 187L930.8 393M890.1 187L945.7 393M914.7 187L970.3 393M262 206.1L1078 -161.1M262 221.7L1078 -145.5M262 234.1L1078 -133.1M262 256.5L1078 -110.7M262 274.1L1078 -93.1M262 294.8L1078 -72.4M262 317.3L1078 -49.9M262 337.9L1078 -29.3M262 360.9L1078 -6.3M262 377.7L1078 10.5M262 399.3L1078 32.1M262 416.6L1078 49.4M262 439.8L1078 72.6M262 462.4L1078 95.2M262 475.6L1078 108.4M262 489.2L1078 122.0M262 503.8L1078 136.6M262 527.4L1078 160.2M262 544.6L1078 177.4M262 564.1L1078 196.9M262 579.8L1078 212.6M262 597.8L1078 230.6M262 614.5L1078 247.3M262 630.7L1078 263.5M262 649.7L1078 282.5M262 668.7L1078 301.5M262 691.6L1078 324.4M262 711.7L1078 344.5M262 734.9L1078 367.7M262 757.2L1078 390.0M262 781.1L1078 413.9M262 801.1L1078 433.9" stroke="#1a1a1a" stroke-width="0.8" fill="none"/><path d="M624 203 L688 190 L702 249 L662 262 Z" fill="#0d0d0d"/><path clip-path="url(#band)" d="M262 7.0L1078 -522.9M262 10.0L1078 -519.9M262 13.0L1078 -516.9M262 16.0L1078 -513.9M262 19.0L1078 -510.9M262 22.0L1078 -507.9M262 25.0L1078 -504.9M262 28.0L1078 -501.9M262 31.0L1078 -498.9M262 34.0L1078 -495.9M262 37.0L1078 -492.9M262 40.0L1078 -489.9M262 43.0L1078 -486.9M262 46.0L1078 -483.9M262 49.0L1078 -480.9M262 52.0L1078 -477.9M262 55.0L1078 -474.9M262 58.0L1078 -471.9M262 61.0L1078 -468.9M262 64.0L1078 -465.9M262 67.0L1078 -462.9M262 70.0L1078 -459.9M262 73.0L1078 -456.9M262 76.0L1078 -453.9M262 79.0L1078 -450.9M262 82.0L1078 -447.9M262 85.0L1078 -444.9M262 88.0L1078 -441.9M262 91.0L1078 -438.9M262 94.0L1078 -435.9M262 97.0L1078 -432.9M262 100.0L1078 -429.9M262 103.0L1078 -426.9M262 106.0L1078 -423.9M262 109.0L1078 -420.9M262 112.0L1078 -417.9M262 115.0L1078 -414.9M262 118.0L1078 -411.9M262 121.0L1078 -408.9M262 124.0L1078 -405.9M262 127.0L1078 -402.9M262 130.0L1078 -399.9M262 133.0L1078 -396.9M262 136.0L1078 -393.9M262 139.0L1078 -390.9M262 142.0L1078 -387.9M262 145.0L1078 -384.9M262 148.0L1078 -381.9M262 151.0L1078 -378.9M262 154.0L1078 -375.9M262 157.0L1078 -372.9M262 160.0L1078 -369.9M262 163.0L1078 -366.9M262 166.0L1078 -363.9M262 169.0L1078 -360.9M262 172.0L1078 -357.9M262 175.0L1078 -354.9M262 178.0L1078 -351.9M262 181.0L1078 -348.9M262 184.0L1078 -345.9M262 187.0L1078 -342.9M262 190.0L1078 -339.9M262 193.0L1078 -336.9M262 196.0L1078 -333.9M262 199.0L1078 -330.9M262 202.0L1078 -327.9M262 205.0L1078 -324.9M262 208.0L1078 -321.9M262 211.0L1078 -318.9M262 214.0L1078 -315.9M262 217.0L1078 -312.9M262 220.0L1078 -309.9M262 223.0L1078 -306.9M262 226.0L1078 -303.9M262 229.0L1078 -300.9M262 232.0L1078 -297.9M262 235.0L1078 -294.9M262 238.0L1078 -291.9M262 241.0L1078 -288.9M262 244.0L1078 -285.9M262 247.0L1078 -282.9M262 250.0L1078 -279.9M262 253.0L1078 -276.9M262 256.0L1078 -273.9M262 259.0L1078 -270.9M262 262.0L1078 -267.9M262 265.0L1078 -264.9M262 268.0L1078 -261.9M262 271.0L1078 -258.9M262 274.0L1078 -255.9M262 277.0L1078 -252.9M262 280.0L1078 -249.9M262 283.0L1078 -246.9M262 286.0L1078 -243.9M262 289.0L1078 -240.9M262 292.0L1078 -237.9M262 295.0L1078 -234.9M262 298.0L1078 -231.9M262 301.0L1078 -228.9M262 304.0L1078 -225.9M262 307.0L1078 -222.9M262 310.0L1078 -219.9M262 313.0L1078 -216.9M262 316.0L1078 -213.9M262 319.0L1078 -210.9M262 322.0L1078 -207.9M262 325.0L1078 -204.9M262 328.0L1078 -201.9M262 331.0L1078 -198.9M262 334.0L1078 -195.9M262 337.0L1078 -192.9M262 340.0L1078 -189.9M262 343.0L1078 -186.9M262 346.0L1078 -183.9M262 349.0L1078 -180.9M262 352.0L1078 -177.9M262 355.0L1078 -174.9M262 358.0L1078 -171.9M262 361.0L1078 -168.9M262 364.0L1078 -165.9M262 367.0L1078 -162.9M262 370.0L1078 -159.9M262 373.0L1078 -156.9M262 376.0L1078 -153.9M262 379.0L1078 -150.9M262 382.0L1078 -147.9M262 385.0L1078 -144.9M262 388.0L1078 -141.9M262 391.0L1078 -138.9M262 394.0L1078 -135.9M262 397.0L1078 -132.9M262 400.0L1078 -129.9M262 403.0L1078 -126.9M262 406.0L1078 -123.9M262 409.0L1078 -120.9M262 412.0L1078 -117.9M262 415.0L1078 -114.9M262 418.0L1078 -111.9M262 421.0L1078 -108.9M262 424.0L1078 -105.9M262 427.0L1078 -102.9M262 430.0L1078 -99.9M262 433.0L1078 -96.9M262 436.0L1078 -93.9M262 439.0L1078 -90.9M262 442.0L1078 -87.9M262 445.0L1078 -84.9M262 448.0L1078 -81.9M262 451.0L1078 -78.9M262 454.0L1078 -75.9M262 457.0L1078 -72.9M262 460.0L1078 -69.9M262 463.0L1078 -66.9M262 466.0L1078 -63.9M262 469.0L1078 -60.9M262 472.0L1078 -57.9M262 475.0L1078 -54.9M262 478.0L1078 -51.9M262 481.0L1078 -48.9M262 484.0L1078 -45.9M262 487.0L1078 -42.9M262 490.0L1078 -39.9M262 493.0L1078 -36.9M262 496.0L1078 -33.9M262 499.0L1078 -30.9M262 502.0L1078 -27.9M262 505.0L1078 -24.9M262 508.0L1078 -21.9M262 511.0L1078 -18.9M262 514.0L1078 -15.9M262 517.0L1078 -12.9M262 520.0L1078 -9.9M262 523.0L1078 -6.9M262 526.0L1078 -3.9M262 529.0L1078 -0.9M262 532.0L1078 2.1M262 535.0L1078 5.1M262 538.0L1078 8.1M262 541.0L1078 11.1M262 544.0L1078 14.1M262 547.0L1078 17.1M262 550.0L1078 20.1M262 553.0L1078 23.1M262 556.0L1078 26.1M262 559.0L1078 29.1M262 562.0L1078 32.1M262 565.0L1078 35.1M262 568.0L1078 38.1M262 571.0L1078 41.1M262 574.0L1078 44.1M262 577.0L1078 47.1M262 580.0L1078 50.1M262 583.0L1078 53.1M262 586.0L1078 56.1M262 589.0L1078 59.1M262 592.0L1078 62.1M262 595.0L1078 65.1M262 598.0L1078 68.1M262 601.0L1078 71.1M262 604.0L1078 74.1M142.0 187L-175.2 393M145.0 187L-172.2 393M148.0 187L-169.2 393M151.0 187L-166.2 393M154.0 187L-163.2 393M157.0 187L-160.2 393M160.0 187L-157.2 393M163.0 187L-154.2 393M166.0 187L-151.2 393M169.0 187L-148.2 393M172.0 187L-145.2 393M175.0 187L-142.2 393M178.0 187L-139.2 393M181.0 187L-136.2 393M184.0 187L-133.2 393M187.0 187L-130.2 393M190.0 187L-127.2 393M193.0 187L-124.2 393M196.0 187L-121.2 393M199.0 187L-118.2 393M202.0 187L-115.2 393M205.0 187L-112.2 393M208.0 187L-109.2 393M211.0 187L-106.2 393M214.0 187L-103.2 393M217.0 187L-100.2 393M220.0 187L-97.2 393M223.0 187L-94.2 393M226.0 187L-91.2 393M229.0 187L-88.2 393M232.0 187L-85.2 393M235.0 187L-82.2 393M238.0 187L-79.2 393M241.0 187L-76.2 393M244.0 187L-73.2 393M247.0 187L-70.2 393M250.0 187L-67.2 393M253.0 187L-64.2 393M256.0 187L-61.2 393M259.0 187L-58.2 393M262.0 187L-55.2 393M265.0 187L-52.2 393M268.0 187L-49.2 393M271.0 187L-46.2 393M274.0 187L-43.2 393M277.0 187L-40.2 393M280.0 187L-37.2 393M283.0 187L-34.2 393M286.0 187L-31.2 393M289.0 187L-28.2 393M292.0 187L-25.2 393M295.0 187L-22.2 393M298.0 187L-19.2 393M301.0 187L-16.2 393M304.0 187L-13.2 393M307.0 187L-10.2 393M310.0 187L-7.2 393M313.0 187L-4.2 393M316.0 187L-1.2 393M319.0 187L1.8 393M322.0 187L4.8 393M325.0 187L7.8 393M328.0 187L10.8 393M331.0 187L13.8 393M334.0 187L16.8 393M337.0 187L19.8 393M340.0 187L22.8 393M343.0 187L25.8 393M346.0 187L28.8 393M349.0 187L31.8 393M352.0 187L34.8 393M355.0 187L37.8 393M358.0 187L40.8 393M361.0 187L43.8 393M364.0 187L46.8 393M367.0 187L49.8 393M370.0 187L52.8 393M373.0 187L55.8 393M376.0 187L58.8 393M379.0 187L61.8 393M382.0 187L64.8 393M385.0 187L67.8 393M388.0 187L70.8 393M391.0 187L73.8 393M394.0 187L76.8 393M397.0 187L79.8 393M400.0 187L82.8 393M403.0 187L85.8 393M406.0 187L88.8 393M409.0 187L91.8 393M412.0 187L94.8 393M415.0 187L97.8 393M418.0 187L100.8 393M421.0 187L103.8 393M424.0 187L106.8 393M427.0 187L109.8 393M430.0 187L112.8 393M433.0 187L115.8 393M436.0 187L118.8 393M439.0 187L121.8 393M442.0 187L124.8 393M445.0 187L127.8 393M448.0 187L130.8 393M451.0 187L133.8 393M454.0 187L136.8 393M457.0 187L139.8 393M460.0 187L142.8 393M463.0 187L145.8 393M466.0 187L148.8 393M469.0 187L151.8 393M472.0 187L154.8 393M475.0 187L157.8 393M478.0 187L160.8 393M481.0 187L163.8 393M484.0 187L166.8 393M487.0 187L169.8 393M490.0 187L172.8 393M493.0 187L175.8 393M496.0 187L178.8 393M499.0 187L181.8 393M502.0 187L184.8 393M505.0 187L187.8 393M508.0 187L190.8 393M511.0 187L193.8 393M514.0 187L196.8 393M517.0 187L199.8 393M520.0 187L202.8 393M523.0 187L205.8 393M526.0 187L208.8 393M529.0 187L211.8 393M532.0 187L214.8 393M535.0 187L217.8 393M538.0 187L220.8 393M541.0 187L223.8 393M544.0 187L226.8 393M547.0 187L229.8 393M550.0 187L232.8 393M553.0 187L235.8 393M556.0 187L238.8 393M559.0 187L241.8 393M562.0 187L244.8 393M565.0 187L247.8 393M568.0 187L250.8 393M571.0 187L253.8 393M574.0 187L256.8 393M577.0 187L259.8 393M580.0 187L262.8 393M583.0 187L265.8 393M586.0 187L268.8 393M589.0 187L271.8 393M592.0 187L274.8 393M595.0 187L277.8 393M598.0 187L280.8 393M601.0 187L283.8 393M604.0 187L286.8 393M607.0 187L289.8 393M610.0 187L292.8 393M613.0 187L295.8 393M616.0 187L298.8 393M619.0 187L301.8 393M622.0 187L304.8 393M625.0 187L307.8 393M628.0 187L310.8 393M631.0 187L313.8 393M634.0 187L316.8 393M637.0 187L319.8 393M640.0 187L322.8 393M643.0 187L325.8 393M646.0 187L328.8 393M649.0 187L331.8 393M652.0 187L334.8 393M655.0 187L337.8 393M658.0 187L340.8 393M661.0 187L343.8 393M664.0 187L346.8 393M667.0 187L349.8 393M670.0 187L352.8 393M673.0 187L355.8 393M676.0 187L358.8 393M679.0 187L361.8 393M682.0 187L364.8 393M685.0 187L367.8 393M688.0 187L370.8 393M691.0 187L373.8 393M694.0 187L376.8 393M697.0 187L379.8 393M700.0 187L382.8 393M703.0 187L385.8 393M706.0 187L388.8 393M709.0 187L391.8 393M712.0 187L394.8 393M715.0 187L397.8 393M718.0 187L400.8 393M721.0 187L403.8 393M724.0 187L406.8 393M727.0 187L409.8 393M730.0 187L412.8 393M733.0 187L415.8 393M736.0 187L418.8 393M739.0 187L421.8 393" stroke="#171717" stroke-width="0.45" fill="none"/><path d="M263.4 207.2 C265.1 205.5 270.3 198.6 273.7 197.0 C277.1 195.4 279.9 198.1 283.9 197.8 C287.9 197.5 293.1 195.8 297.6 195.2 C302.2 194.6 306.6 194.4 311.2 194.4 C315.8 194.4 320.9 194.5 324.9 195.2 C328.9 195.9 332.6 198.7 335.2 198.7 C337.8 198.7 338.0 197.0 340.3 195.2 C342.6 193.3 347.4 188.9 348.8 187.6" stroke="#232323" stroke-width="0.9" fill="none"/><path d="M283.9 197.8 C284.2 199.1 283.6 202.2 285.6 205.5 C287.6 208.8 293.3 214.1 295.9 217.5 C298.5 220.9 298.4 224.0 301.0 226.0 C303.6 228.0 309.5 227.1 311.2 229.4 C312.9 231.7 308.9 238.0 311.2 239.7 C313.5 241.4 319.8 239.4 324.9 239.7 C330.0 240.0 338.9 240.3 342.0 241.4 C345.1 242.5 344.6 243.9 343.7 246.5 C342.8 249.1 340.9 254.1 336.9 256.7 C332.9 259.3 325.8 259.9 319.8 261.9 C313.8 263.9 307.0 267.0 301.0 268.7 C295.0 270.4 289.0 270.5 283.9 272.1 C278.8 273.7 273.9 276.8 270.2 278.1 C266.5 279.4 263.1 279.5 261.7 279.8" stroke="#232323" stroke-width="0.9" fill="none"/><path d="M335.2 198.7 C334.1 202.1 330.6 213.5 328.3 219.2 C326.0 224.9 324.4 229.4 321.5 232.8 C318.6 236.2 312.9 238.5 311.2 239.7" stroke="#232323" stroke-width="0.9" fill="none"/><path d="M261.7 253.3 C263.7 253.3 270.3 254.2 273.7 253.3 C277.1 252.5 279.6 248.5 282.2 248.2 C284.8 247.9 285.6 251.6 289.0 251.6 C292.4 251.6 299.0 248.2 302.7 248.2 C306.4 248.2 307.8 250.8 311.2 251.6 C314.6 252.4 319.8 252.2 323.2 253.3 C326.6 254.5 330.3 257.6 331.7 258.5" stroke="#232323" stroke-width="0.9" fill="none"/><path d="M336.9 256.7 C340.0 253.3 350.0 241.3 355.7 236.2 C361.4 231.1 366.2 229.4 371.0 226.0 C375.8 222.6 380.4 218.8 384.7 215.7 C389.0 212.6 391.9 208.6 396.7 207.2 C401.5 205.8 408.6 208.0 413.7 207.2 C418.8 206.3 424.0 202.1 427.4 202.1 C430.8 202.1 431.6 207.2 434.2 207.2 C436.8 207.2 439.9 204.1 442.8 202.1 C445.7 200.1 449.9 196.3 451.3 195.2" stroke="#232323" stroke-width="0.9" fill="none"/><path d="M369.3 249.9 C371.0 246.5 375.6 235.1 379.6 229.4 C383.6 223.7 384.7 219.4 393.2 215.7 C401.7 212.0 424.5 208.6 430.8 207.2" stroke="#232323" stroke-width="0.9" fill="none"/><path d="M345.4 268.7 C348.2 268.7 356.8 267.8 362.5 268.7 C368.2 269.6 373.9 273.2 379.6 273.8 C385.3 274.4 391.6 273.2 396.7 272.1 C401.8 271.0 406.0 269.3 410.3 267.0 C414.6 264.7 420.3 259.9 422.3 258.5" stroke="#232323" stroke-width="0.9" fill="none"/><path d="M418.9 232.8 C419.8 232.5 421.7 230.5 424.0 231.1 C426.3 231.7 429.6 234.8 432.5 236.2 C435.4 237.6 435.7 240.0 441.1 239.7 C446.5 239.4 461.0 235.4 465.0 234.5" stroke="#232323" stroke-width="0.9" fill="none"/><path d="M417.2 232.8 C417.8 234.2 421.2 237.4 420.6 241.4 C420.0 245.4 415.7 251.9 413.7 256.7 C411.7 261.5 409.5 268.1 408.6 270.4" stroke="#232323" stroke-width="0.9" fill="none"/><path d="M261.7 327.3 C267.1 327.3 287.1 328.7 294.2 327.3 C301.3 325.9 301.8 322.4 304.4 318.7 C306.9 315.0 305.8 308.5 309.5 305.1 C313.2 301.7 319.2 300.5 326.6 298.2 C334.0 295.9 348.0 293.1 354.0 291.4 C360.0 289.7 361.1 288.6 362.5 288.0" stroke="#232323" stroke-width="0.9" fill="none"/><path d="M263.4 293.1 C265.1 292.8 269.7 291.4 273.7 291.4 C277.7 291.4 284.5 290.8 287.3 293.1 C290.1 295.4 289.6 302.2 290.7 305.1 C291.8 308.0 291.9 307.9 294.2 310.2 C296.5 312.5 302.7 317.3 304.4 318.7" stroke="#232323" stroke-width="0.9" fill="none"/><path d="M1020.0 226.8 C1021.2 226.5 1024.9 224.7 1027.3 225.0 C1029.7 225.3 1032.4 225.6 1034.5 228.6 C1036.6 231.6 1036.3 239.5 1040.0 243.2 C1043.7 246.8 1050.1 249.6 1056.4 250.5 C1062.7 251.4 1074.4 248.9 1078.0 248.6" stroke="#232323" stroke-width="0.9" fill="none"/><path d="M969.0 185.0 C967.8 187.7 964.8 197.2 961.8 201.4 C958.8 205.7 955.9 209.3 951.0 210.5 C946.1 211.7 935.8 208.9 932.7 208.6" stroke="#232323" stroke-width="0.9" fill="none"/><path d="M487.3 322.2 C491.3 323.9 502.1 327.8 511.2 332.4 C520.3 336.9 535.5 344.9 542.0 349.5 C548.5 354.1 548.2 357.1 550.5 359.7 C552.8 362.3 550.9 363.5 555.7 364.9 C560.6 366.3 569.9 369.2 579.6 368.3 C589.3 367.4 608.0 361.1 613.7 359.7" stroke="#232323" stroke-width="0.9" fill="none"/><path d="M548.8 288.0 C548.2 290.8 545.4 297.9 545.4 305.0 C545.4 312.1 548.8 322.1 548.8 330.7 C548.8 339.2 546.8 349.2 545.4 356.3 C544.0 363.4 541.1 370.5 540.3 373.4" stroke="#232323" stroke-width="0.9" fill="none"/><path d="M460.0 384.0 C465.7 383.0 482.7 378.0 494.0 378.0 C505.3 378.0 516.7 383.7 528.0 384.0 C539.3 384.3 550.0 379.7 562.0 380.0 C574.0 380.3 587.0 386.0 600.0 386.0 C613.0 386.0 633.3 381.0 640.0 380.0" stroke="#232323" stroke-width="0.9" fill="none"/><path d="M1040.0 393.0 C1043.3 390.8 1053.7 383.5 1060.0 380.0 C1066.3 376.5 1075.0 373.3 1078.0 372.0" stroke="#232323" stroke-width="0.9" fill="none"/><path d="M1010.0 290.0 C1010.3 296.7 1013.7 318.3 1012.0 330.0 C1010.3 341.7 1002.8 349.5 1000.0 360.0 C997.2 370.5 995.8 387.5 995.0 393.0" stroke="#232323" stroke-width="0.9" fill="none"/><path d="M891.5 211.5 L959.5 317.7 L992.7 370.8" stroke="#1c1c1c" stroke-width="1.6" fill="none"/><path d="M891.5 211.5 L959.5 317.7 L992.7 370.8" stroke="#0a0a0a" stroke-width="0.7" fill="none"/><path d="M916.4 214.9 L1002.7 291.2" stroke="#1c1c1c" stroke-width="1.6" fill="none"/><path d="M916.4 214.9 L1002.7 291.2" stroke="#0a0a0a" stroke-width="0.7" fill="none"/><path d="M926.4 185.0 L929.7 208.2 L959.5 204.9 L969.5 185.0" stroke="#1c1c1c" stroke-width="1.6" fill="none"/><path d="M926.4 185.0 L929.7 208.2 L959.5 204.9 L969.5 185.0" stroke="#0a0a0a" stroke-width="0.7" fill="none"/><path d="M1002.7 291.2 L999.3 327.7 L986.1 340.9" stroke="#1c1c1c" stroke-width="1.6" fill="none"/><path d="M1002.7 291.2 L999.3 327.7 L986.1 340.9" stroke="#0a0a0a" stroke-width="0.7" fill="none"/><path d="M879.9 244.7 L913.1 244.7" stroke="#1c1c1c" stroke-width="1.6" fill="none"/><path d="M879.9 244.7 L913.1 244.7" stroke="#0a0a0a" stroke-width="0.7" fill="none"/><path d="M879.9 294.5 L923.0 294.5" stroke="#1c1c1c" stroke-width="1.6" fill="none"/><path d="M879.9 294.5 L923.0 294.5" stroke="#0a0a0a" stroke-width="0.7" fill="none"/><path d="M909.8 221.5 L942.9 204.9" stroke="#1c1c1c" stroke-width="1.6" fill="none"/><path d="M909.8 221.5 L942.9 204.9" stroke="#0a0a0a" stroke-width="0.7" fill="none"/><path d="M919.7 238.1 L956.2 221.5" stroke="#1c1c1c" stroke-width="1.6" fill="none"/><path d="M919.7 238.1 L956.2 221.5" stroke="#0a0a0a" stroke-width="0.7" fill="none"/><path d="M929.7 254.7 L969.5 238.1" stroke="#1c1c1c" stroke-width="1.6" fill="none"/><path d="M929.7 254.7 L969.5 238.1" stroke="#0a0a0a" stroke-width="0.7" fill="none"/><path d="M942.9 271.3 L982.8 254.7" stroke="#1c1c1c" stroke-width="1.6" fill="none"/><path d="M942.9 271.3 L982.8 254.7" stroke="#0a0a0a" stroke-width="0.7" fill="none"/><path d="M952.9 287.9 L996.0 272.9" stroke="#1c1c1c" stroke-width="1.6" fill="none"/><path d="M952.9 287.9 L996.0 272.9" stroke="#0a0a0a" stroke-width="0.7" fill="none"/><path d="M966.2 304.4 L1002.7 291.2" stroke="#1c1c1c" stroke-width="1.6" fill="none"/><path d="M966.2 304.4 L1002.7 291.2" stroke="#0a0a0a" stroke-width="0.7" fill="none"/><path d="M459.9 186.7 C458.8 188.7 455.3 192.1 453.0 198.7 C450.7 205.2 449.9 218.0 446.2 226.0 C442.5 234.0 435.4 240.8 430.8 246.5 C426.2 252.2 422.3 255.1 418.9 260.2 C415.5 265.3 412.0 272.2 410.3 277.2 C408.6 282.2 407.5 282.5 408.6 290.0 C409.8 297.5 414.1 313.1 417.2 322.2 C420.3 331.3 424.0 336.4 427.4 344.4 C430.8 352.4 434.6 361.9 437.7 370.0 C440.8 378.1 444.8 389.2 446.2 393.0" stroke="#222222" stroke-width="2.0" fill="none"/><path d="M459.9 186.7 C458.8 188.7 455.3 192.1 453.0 198.7 C450.7 205.2 449.9 218.0 446.2 226.0 C442.5 234.0 435.4 240.8 430.8 246.5 C426.2 252.2 422.3 255.1 418.9 260.2 C415.5 265.3 412.0 272.2 410.3 277.2 C408.6 282.2 407.5 282.5 408.6 290.0 C409.8 297.5 414.1 313.1 417.2 322.2 C420.3 331.3 424.0 336.4 427.4 344.4 C430.8 352.4 434.6 361.9 437.7 370.0 C440.8 378.1 444.8 389.2 446.2 393.0" stroke="#060606" stroke-width="1.1" fill="none"/><path d="M461.7 191.8 C464.8 194.4 473.9 201.2 480.5 207.2 C487.1 213.2 495.0 220.6 501.0 227.7 C507.0 234.8 511.8 243.3 516.4 249.9 C520.9 256.4 524.9 260.3 528.3 267.0 C531.7 273.7 535.5 286.2 536.9 290.0" stroke="#222222" stroke-width="2.0" fill="none"/><path d="M461.7 191.8 C464.8 194.4 473.9 201.2 480.5 207.2 C487.1 213.2 495.0 220.6 501.0 227.7 C507.0 234.8 511.8 243.3 516.4 249.9 C520.9 256.4 524.9 260.3 528.3 267.0 C531.7 273.7 535.5 286.2 536.9 290.0" stroke="#060606" stroke-width="1.1" fill="none"/><path d="M342.0 363.2 C346.0 360.6 357.4 353.2 365.9 347.8 C374.4 342.4 385.2 336.1 393.2 330.7 C401.2 325.3 407.4 318.7 413.7 315.3 C420.0 311.9 423.1 304.8 430.8 310.2 C438.5 315.6 455.1 341.5 460.0 347.8" stroke="#222222" stroke-width="2.0" fill="none"/><path d="M342.0 363.2 C346.0 360.6 357.4 353.2 365.9 347.8 C374.4 342.4 385.2 336.1 393.2 330.7 C401.2 325.3 407.4 318.7 413.7 315.3 C420.0 311.9 423.1 304.8 430.8 310.2 C438.5 315.6 455.1 341.5 460.0 347.8" stroke="#060606" stroke-width="1.1" fill="none"/><path d="M430.8 310.2 C435.7 308.5 450.6 298.0 460.0 300.0 C469.4 302.0 482.8 318.5 487.3 322.2" stroke="#222222" stroke-width="2.0" fill="none"/><path d="M430.8 310.2 C435.7 308.5 450.6 298.0 460.0 300.0 C469.4 302.0 482.8 318.5 487.3 322.2" stroke="#060606" stroke-width="1.1" fill="none"/><path d="M460.0 347.8 C464.6 343.5 478.8 328.8 487.3 322.2 C495.8 315.6 502.9 312.8 511.2 308.5 C519.5 304.2 530.6 299.9 536.9 296.5 C543.2 293.1 541.6 291.1 548.8 288.0 C556.0 284.9 569.6 281.3 580.0 278.0 C590.4 274.7 597.7 270.7 611.0 268.0 C624.3 265.3 646.0 265.0 660.0 262.0 C674.0 259.0 683.3 255.9 695.0 249.8 C706.7 243.7 714.8 235.8 730.0 225.3 C745.2 214.8 776.7 193.2 786.0 186.8" stroke="#222222" stroke-width="2.0" fill="none"/><path d="M460.0 347.8 C464.6 343.5 478.8 328.8 487.3 322.2 C495.8 315.6 502.9 312.8 511.2 308.5 C519.5 304.2 530.6 299.9 536.9 296.5 C543.2 293.1 541.6 291.1 548.8 288.0 C556.0 284.9 569.6 281.3 580.0 278.0 C590.4 274.7 597.7 270.7 611.0 268.0 C624.3 265.3 646.0 265.0 660.0 262.0 C674.0 259.0 683.3 255.9 695.0 249.8 C706.7 243.7 714.8 235.8 730.0 225.3 C745.2 214.8 776.7 193.2 786.0 186.8" stroke="#060606" stroke-width="1.1" fill="none"/><path d="M465.0 339.2 C462.1 343.2 452.2 356.4 447.9 363.2 C443.6 370.0 442.2 375.2 439.4 380.2 C436.5 385.2 432.2 390.9 430.8 393.0" stroke="#222222" stroke-width="2.0" fill="none"/><path d="M465.0 339.2 C462.1 343.2 452.2 356.4 447.9 363.2 C443.6 370.0 442.2 375.2 439.4 380.2 C436.5 385.2 432.2 390.9 430.8 393.0" stroke="#060606" stroke-width="1.1" fill="none"/><path d="M562.5 382.0 C568.2 375.7 585.3 357.2 596.7 344.4 C608.1 331.6 622.3 314.4 630.8 305.0 C639.3 295.6 639.7 293.8 647.9 288.0 C656.1 282.2 669.2 276.3 680.0 270.0 C690.8 263.7 707.1 253.3 712.5 250.0" stroke="#222222" stroke-width="2.0" fill="none"/><path d="M562.5 382.0 C568.2 375.7 585.3 357.2 596.7 344.4 C608.1 331.6 622.3 314.4 630.8 305.0 C639.3 295.6 639.7 293.8 647.9 288.0 C656.1 282.2 669.2 276.3 680.0 270.0 C690.8 263.7 707.1 253.3 712.5 250.0" stroke="#060606" stroke-width="1.1" fill="none"/><path d="M660.0 323.0 C668.8 320.1 696.2 311.3 712.5 305.5 C728.8 299.7 743.4 295.8 758.0 288.0 C772.6 280.2 787.2 266.0 800.0 258.5 C812.8 251.0 823.3 248.3 835.0 242.8 C846.7 237.3 861.7 229.4 870.0 225.3 C878.3 221.2 882.5 219.2 885.0 218.0" stroke="#222222" stroke-width="2.0" fill="none"/><path d="M660.0 323.0 C668.8 320.1 696.2 311.3 712.5 305.5 C728.8 299.7 743.4 295.8 758.0 288.0 C772.6 280.2 787.2 266.0 800.0 258.5 C812.8 251.0 823.3 248.3 835.0 242.8 C846.7 237.3 861.7 229.4 870.0 225.3 C878.3 221.2 882.5 219.2 885.0 218.0" stroke="#060606" stroke-width="1.1" fill="none"/><path d="M712.5 393.0 C721.2 389.5 750.4 377.2 765.0 372.0 C779.6 366.8 788.3 365.9 800.0 361.5 C811.7 357.1 823.3 351.3 835.0 345.8 C846.7 340.2 864.2 331.2 870.0 328.2" stroke="#222222" stroke-width="2.0" fill="none"/><path d="M712.5 393.0 C721.2 389.5 750.4 377.2 765.0 372.0 C779.6 366.8 788.3 365.9 800.0 361.5 C811.7 357.1 823.3 351.3 835.0 345.8 C846.7 340.2 864.2 331.2 870.0 328.2" stroke="#060606" stroke-width="1.1" fill="none"/><path d="M710.8 185.0 C714.0 191.7 724.8 215.1 730.0 225.3 C735.2 235.5 739.1 240.2 742.3 246.3 C745.5 252.4 747.3 255.1 749.3 262.0 C751.3 268.9 751.9 280.2 754.5 288.0 C757.1 295.8 760.3 301.7 765.0 309.0 C769.7 316.3 777.8 322.1 782.5 331.8 C787.2 341.4 790.1 356.5 793.0 366.8 C795.9 377.0 798.8 388.6 800.0 393.0" stroke="#222222" stroke-width="2.0" fill="none"/><path d="M710.8 185.0 C714.0 191.7 724.8 215.1 730.0 225.3 C735.2 235.5 739.1 240.2 742.3 246.3 C745.5 252.4 747.3 255.1 749.3 262.0 C751.3 268.9 751.9 280.2 754.5 288.0 C757.1 295.8 760.3 301.7 765.0 309.0 C769.7 316.3 777.8 322.1 782.5 331.8 C787.2 341.4 790.1 356.5 793.0 366.8 C795.9 377.0 798.8 388.6 800.0 393.0" stroke="#060606" stroke-width="1.1" fill="none"/><path d="M586.0 187.0 C587.3 191.7 591.0 204.5 594.0 215.0 C597.0 225.5 600.5 238.3 604.0 250.0 C607.5 261.7 610.5 278.7 615.0 285.0 C619.5 291.3 627.0 279.0 630.8 288.0 C634.6 297.0 636.0 321.7 637.7 339.2 C639.4 356.7 640.5 384.0 641.1 393.0" stroke="#222222" stroke-width="2.0" fill="none"/><path d="M586.0 187.0 C587.3 191.7 591.0 204.5 594.0 215.0 C597.0 225.5 600.5 238.3 604.0 250.0 C607.5 261.7 610.5 278.7 615.0 285.0 C619.5 291.3 627.0 279.0 630.8 288.0 C634.6 297.0 636.0 321.7 637.7 339.2 C639.4 356.7 640.5 384.0 641.1 393.0" stroke="#060606" stroke-width="1.1" fill="none"/><path d="M889.0 185.0 C889.6 188.3 893.3 199.6 892.7 205.0 C892.1 210.4 887.6 212.5 885.5 217.7 C883.4 222.9 881.2 229.3 880.0 236.0 C878.8 242.7 878.5 248.7 878.2 257.7 C877.9 266.7 878.2 280.4 878.2 290.0 C878.2 299.6 879.4 308.1 878.2 315.3 C877.0 322.6 874.0 328.6 871.0 333.5 C868.0 338.4 866.0 340.9 860.0 344.4 C854.0 347.9 845.0 350.2 835.0 354.5 C825.0 358.8 811.7 366.2 800.0 370.2 C788.3 374.3 775.2 375.2 765.0 379.0 C754.8 382.8 743.1 390.7 738.8 393.0" stroke="#222222" stroke-width="2.0" fill="none"/><path d="M889.0 185.0 C889.6 188.3 893.3 199.6 892.7 205.0 C892.1 210.4 887.6 212.5 885.5 217.7 C883.4 222.9 881.2 229.3 880.0 236.0 C878.8 242.7 878.5 248.7 878.2 257.7 C877.9 266.7 878.2 280.4 878.2 290.0 C878.2 299.6 879.4 308.1 878.2 315.3 C877.0 322.6 874.0 328.6 871.0 333.5 C868.0 338.4 866.0 340.9 860.0 344.4 C854.0 347.9 845.0 350.2 835.0 354.5 C825.0 358.8 811.7 366.2 800.0 370.2 C788.3 374.3 775.2 375.2 765.0 379.0 C754.8 382.8 743.1 390.7 738.8 393.0" stroke="#060606" stroke-width="1.1" fill="none"/><path d="M892.7 208.6 C895.1 213.8 902.8 230.7 907.3 239.5 C911.8 248.3 915.8 253.0 920.0 261.4 C924.2 269.8 930.6 285.2 932.7 290.0" stroke="#222222" stroke-width="2.0" fill="none"/><path d="M892.7 208.6 C895.1 213.8 902.8 230.7 907.3 239.5 C911.8 248.3 915.8 253.0 920.0 261.4 C924.2 269.8 930.6 285.2 932.7 290.0" stroke="#060606" stroke-width="1.1" fill="none"/><path d="M817.5 290.0 C826.2 286.5 861.2 272.5 870.0 269.0" stroke="#222222" stroke-width="2.0" fill="none"/><path d="M817.5 290.0 C826.2 286.5 861.2 272.5 870.0 269.0" stroke="#060606" stroke-width="1.1" fill="none"/><path d="M500.0 260.0 C507.5 257.5 530.8 249.7 545.0 245.0 C559.2 240.3 572.5 235.8 585.0 232.0 C597.5 228.2 614.2 223.7 620.0 222.0" stroke="#222222" stroke-width="2.0" fill="none"/><path d="M500.0 260.0 C507.5 257.5 530.8 249.7 545.0 245.0 C559.2 240.3 572.5 235.8 585.0 232.0 C597.5 228.2 614.2 223.7 620.0 222.0" stroke="#060606" stroke-width="1.1" fill="none"/><path d="M510.0 290.0 C518.3 287.7 551.7 278.3 560.0 276.0" stroke="#222222" stroke-width="2.0" fill="none"/><path d="M510.0 290.0 C518.3 287.7 551.7 278.3 560.0 276.0" stroke="#060606" stroke-width="1.1" fill="none"/></g></svg>
<div class="t" style="left:363.6px;top:215.7px;width:200px;text-align:center;font-size:4.6px;line-height:4.6px;color:#62676e;letter-spacing:0.3px;-webkit-text-stroke:0">AL</div>
<div class="t" style="left:361.4px;top:221.29999999999998px;width:200px;text-align:center;font-size:4.6px;line-height:4.6px;color:#62676e;letter-spacing:0.3px;-webkit-text-stroke:0">KHUZAMA</div>
<div class="t" style="left:413.4px;top:277.2px;width:200px;text-align:center;font-size:4.6px;line-height:4.6px;color:#62676e;letter-spacing:0.3px;-webkit-text-stroke:0">HAYY AS</div>
<div class="t" style="left:413.4px;top:282.2px;width:200px;text-align:center;font-size:4.6px;line-height:4.6px;color:#62676e;letter-spacing:0.3px;-webkit-text-stroke:0">SIFARAT</div>
<div class="t" style="left:413.4px;top:287.2px;width:200px;text-align:center;font-size:4.6px;line-height:4.6px;color:#62676e;letter-spacing:0.3px;-webkit-text-stroke:0">(EMBASSY</div>
<div class="t" style="left:413.4px;top:292.2px;width:200px;text-align:center;font-size:4.6px;line-height:4.6px;color:#62676e;letter-spacing:0.3px;-webkit-text-stroke:0">QUARTER)</div>
<div class="t" style="left:448px;top:258.8px;width:200px;text-align:center;font-size:4.6px;line-height:4.6px;color:#62676e;letter-spacing:0.3px;-webkit-text-stroke:0">UMM AL</div>
<div class="t" style="left:448px;top:263.59999999999997px;width:200px;text-align:center;font-size:4.6px;line-height:4.6px;color:#62676e;letter-spacing:0.3px;-webkit-text-stroke:0">HAMAM</div>
<div class="t" style="left:637px;top:191.7px;width:200px;text-align:center;font-size:4.6px;line-height:4.6px;color:#62676e;letter-spacing:0.3px;-webkit-text-stroke:0">AR RAWDAH</div>
<div class="t" style="left:728.5px;top:217.7px;width:200px;text-align:center;font-size:4.6px;line-height:4.6px;color:#62676e;letter-spacing:0.3px;-webkit-text-stroke:0">AN NASIM</div>
<div class="t" style="left:624.4px;top:261.09999999999997px;width:200px;text-align:center;font-size:4.6px;line-height:4.6px;color:#62676e;letter-spacing:0.3px;-webkit-text-stroke:0">AR RABWAH</div>
<div class="t" style="left:695.8px;top:278.5px;width:200px;text-align:center;font-size:4.6px;line-height:4.6px;color:#62676e;letter-spacing:0.3px;-webkit-text-stroke:0">AL FAKHA</div>
<div class="t" style="left:612px;top:286.7px;width:200px;text-align:center;font-size:4.6px;line-height:4.6px;color:#62676e;letter-spacing:0.3px;-webkit-text-stroke:0">JARIR</div>
<div class="t" style="left:646.2px;top:297.59999999999997px;width:200px;text-align:center;font-size:4.6px;line-height:4.6px;color:#62676e;letter-spacing:0.3px;-webkit-text-stroke:0">AL SAFA</div>
<div class="t" style="left:795.2px;top:280.9px;width:200px;text-align:center;font-size:4.6px;line-height:4.6px;color:#62676e;letter-spacing:0.3px;-webkit-text-stroke:0">KHASHM AL</div>
<div class="t" style="left:795.2px;top:285.7px;width:200px;text-align:center;font-size:4.6px;line-height:4.6px;color:#62676e;letter-spacing:0.3px;-webkit-text-stroke:0">AN</div>
<div class="t" style="left:645.9px;top:362.9px;width:200px;text-align:center;font-size:4.6px;line-height:4.6px;color:#62676e;letter-spacing:0.3px;-webkit-text-stroke:0">AL</div>
<div class="t" style="left:645.9px;top:368.7px;width:200px;text-align:center;font-size:4.6px;line-height:4.6px;color:#62676e;letter-spacing:0.3px;-webkit-text-stroke:0">FAYSALIYAH</div>
<div class="t" style="left:546px;top:315.7px;width:200px;text-align:center;font-size:4.6px;line-height:4.6px;color:#62676e;letter-spacing:0.3px;-webkit-text-stroke:0">AL</div>
<div class="t" style="left:546px;top:321.5px;width:200px;text-align:center;font-size:4.6px;line-height:4.6px;color:#62676e;letter-spacing:0.3px;-webkit-text-stroke:0">MURABBA</div>
<div class="t" style="left:428.20000000000005px;top:320.2px;width:200px;text-align:center;font-size:4.6px;line-height:4.6px;color:#62676e;letter-spacing:0.3px;-webkit-text-stroke:0">ALIHADA</div>
<div class="t" style="left:472.6px;top:353.3px;width:200px;text-align:center;font-size:4.6px;line-height:4.6px;color:#62676e;letter-spacing:0.3px;-webkit-text-stroke:0">AS SOKARAH</div>
<div class="t" style="left:370.1px;top:356.7px;width:200px;text-align:center;font-size:4.6px;line-height:4.6px;color:#62676e;letter-spacing:0.3px;-webkit-text-stroke:0">HIJRAT</div>
<div class="t" style="left:370.1px;top:361.9px;width:200px;text-align:center;font-size:4.6px;line-height:4.6px;color:#62676e;letter-spacing:0.3px;-webkit-text-stroke:0">LABAN</div>
<div class="t" style="left:303.5px;top:362.5px;width:200px;text-align:center;font-size:4.6px;line-height:4.6px;color:#62676e;letter-spacing:0.3px;-webkit-text-stroke:0">DHAHRAT</div>
<div class="t" style="left:303.5px;top:368.0px;width:200px;text-align:center;font-size:4.6px;line-height:4.6px;color:#62676e;letter-spacing:0.3px;-webkit-text-stroke:0">LABAN</div>
<div class="t" style="left:557.2px;top:352.5px;width:200px;text-align:center;font-size:9.0px;line-height:9.0px;color:#8e949e;letter-spacing:0.75px;-webkit-text-stroke:0">RIYADH</div>
<div class="b" style="left:271.7px;top:201.4px;width:6.600000000000023px;height:1.4000000000000057px;background:#ececec"></div>
<div class="b" style="left:274.3px;top:198.8px;width:1.3999999999999773px;height:6.599999999999994px;background:#ececec"></div>
<div class="b" style="left:271.7px;top:217.2px;width:6.600000000000023px;height:1.4000000000000057px;background:#e6e6e6"></div>
<div class="t" style="left:566.80px;top:210.50px;font-size:6.5px;line-height:6.5px;color:#f4f4f4;font-weight:bold;font-family:'Liberation Sans';-webkit-text-stroke:0;text-shadow:0 0 2px #000,0 0 2px #000">Demo HQ Branch</div><svg class="b" style="left:590.9px;top:219px" width="6" height="4" viewBox="0 0 6 4"><path d="M0 0H6L3 3.2Z" fill="#f2f2f2"/></svg><div class="b" style="left:588.6999999999999px;top:222.8px;width:10.400000000000091px;height:10.399999999999977px;background:#d43a3a;border-radius:50%;box-shadow:inset 0 0 0 1.7px #f3c6c6,0 0 2px rgba(0,0,0,0.8)"></div>
<div class="t" style="left:595.80px;top:254.90px;font-size:6.5px;line-height:6.5px;color:#f4f4f4;font-weight:bold;font-family:'Liberation Sans';-webkit-text-stroke:0;text-shadow:0 0 2px #000,0 0 2px #000">Demo Mall Branch</div><svg class="b" style="left:621px;top:263.6px" width="6" height="4" viewBox="0 0 6 4"><path d="M0 0H6L3 3.2Z" fill="#f2f2f2"/></svg><div class="b" style="left:618.8px;top:267.40000000000003px;width:10.400000000000091px;height:10.399999999999977px;background:#d43a3a;border-radius:50%;box-shadow:inset 0 0 0 1.7px #f3c6c6,0 0 2px rgba(0,0,0,0.8)"></div>
<div class="t" style="left:707.80px;top:335.60px;font-size:6.5px;line-height:6.5px;color:#f4f4f4;font-weight:bold;font-family:'Liberation Sans';-webkit-text-stroke:0;text-shadow:0 0 2px #000,0 0 2px #000">Demo Downtown Branch</div><svg class="b" style="left:742.6px;top:344.1px" width="6" height="4" viewBox="0 0 6 4"><path d="M0 0H6L3 3.2Z" fill="#f2f2f2"/></svg><div class="b" style="left:740.4px;top:347.90000000000003px;width:10.400000000000091px;height:10.399999999999977px;background:#d43a3a;border-radius:50%;box-shadow:inset 0 0 0 1.7px #f3c6c6,0 0 2px rgba(0,0,0,0.8)"></div>
<div class="b" style="left:270.2px;top:362.6px;width:72.60000000000002px;height:21.899999999999977px;background:#151b29;border-radius:5px"></div>
<svg class="b" style="left:276.8px;top:369.3px;" width="8.5" height="8.5" viewBox="0 0 24 24" fill="none" stroke="#d6d6d6" stroke-width="2.6" stroke-linecap="round" stroke-linejoin="round"><path d="M20 10c0 4.99-5.54 10.19-7.4 11.8a1 1 0 0 1-1.2 0C9.54 20.19 4 14.99 4 10a8 8 0 0 1 16 0"/><circle cx="12" cy="10" r="3"/></svg>
<div class="t" style="left:289.90px;top:370.14px;font-size:9.05px;line-height:9.05px;color:#f0f0f0;font-weight:normal;font-family:'Liberation Sans';-webkit-text-stroke:0.4px #f0f0f0">3 Branches</div>
<div class="b" style="left:919.2px;top:387px;width:6.599999999999909px;height:2.1999999999999886px;background:#3b5ba0"></div>
<div class="b" style="left:919.2px;top:389.2px;width:6.599999999999909px;height:2.1999999999999886px;background:#e5c640"></div>
<div class="t" style="left:927.50px;top:386.26px;font-size:6.66px;line-height:6.66px;color:#e6e6e6;font-weight:normal;font-family:'Liberation Sans';">Leaflet | © CARTO © OpenStreetMap contributors</div>
<div class="b" style="left:249px;top:423px;width:133px;height:16px;background:#121212;border-radius:4px"></div>
<div class="t" style="left:255.00px;top:427.14px;font-size:8.1px;line-height:8.1px;color:#8c8c8c;font-weight:normal;font-family:'Liberation Sans';">Filter branches...</div>
<svg class="b" style="left:1049.6px;top:427px;" width="8" height="7" viewBox="0 0 8 7" fill="none" stroke="#e0e0e0" stroke-width="0.95" stroke-linecap="round" stroke-linejoin="round"><path d="M3.5 1.8H7.5M0.5 1.8H1.1M6.3 5.2H7.5M0.5 5.2H3.9"/><circle cx="2.3" cy="1.8" r="1.15"/><circle cx="5.1" cy="5.2" r="1.15"/></svg>
<div class="t" style="left:1065.30px;top:426.33px;font-size:9.3px;line-height:9.3px;color:#ececec;font-weight:normal;font-family:'Liberation Sans';">View</div>
<div class="b" style="left:249px;top:447px;width:841px;height:101px;border:1px solid #131313;border-radius:6px;box-sizing:border-box"></div>
<div class="b" style="left:250px;top:470px;width:839px;height:1px;background:#111111"></div>
<div class="b" style="left:250px;top:496px;width:839px;height:1px;background:#111111"></div>
<div class="b" style="left:250px;top:522px;width:839px;height:1px;background:#111111"></div>
<div class="t" style="left:271.75px;top:454.88px;font-size:9.0px;line-height:9.0px;color:#ececec;font-weight:normal;font-family:'Liberation Sans';">Branch Name</div>
<svg class="b" style="left:336.6px;top:455.8px;" width="4" height="6.8" viewBox="0 0 4 6.6" fill="none" stroke="#c8c8c8" stroke-width="0.95" stroke-linecap="round" stroke-linejoin="round"><path d="M0.6 2.2 L2 0.8 L3.4 2.2 M0.6 4.4 L2 5.8 L3.4 4.4"/></svg>
<div class="t" style="left:466.25px;top:454.88px;font-size:9.0px;line-height:9.0px;color:#ececec;font-weight:normal;font-family:'Liberation Sans';">Brand</div>
<svg class="b" style="left:500.7px;top:455.8px;" width="4" height="6.8" viewBox="0 0 4 6.6" fill="none" stroke="#c8c8c8" stroke-width="0.95" stroke-linecap="round" stroke-linejoin="round"><path d="M0.6 2.2 L2 0.8 L3.4 2.2 M0.6 4.4 L2 5.8 L3.4 4.4"/></svg>
<div class="t" style="left:588.75px;top:454.88px;font-size:9.0px;line-height:9.0px;color:#ececec;font-weight:normal;font-family:'Liberation Sans';">Slug</div>
<svg class="b" style="left:616.95px;top:455.8px;" width="4" height="6.8" viewBox="0 0 4 6.6" fill="none" stroke="#c8c8c8" stroke-width="0.95" stroke-linecap="round" stroke-linejoin="round"><path d="M0.6 2.2 L2 0.8 L3.4 2.2 M0.6 4.4 L2 5.8 L3.4 4.4"/></svg>
<div class="t" style="left:766.75px;top:454.88px;font-size:9.0px;line-height:9.0px;color:#ececec;font-weight:normal;font-family:'Liberation Sans';">Latitude</div>
<svg class="b" style="left:809.45px;top:455.8px;" width="4" height="6.8" viewBox="0 0 4 6.6" fill="none" stroke="#c8c8c8" stroke-width="0.95" stroke-linecap="round" stroke-linejoin="round"><path d="M0.6 2.2 L2 0.8 L3.4 2.2 M0.6 4.4 L2 5.8 L3.4 4.4"/></svg>
<div class="t" style="left:862.40px;top:454.88px;font-size:9.0px;line-height:9.0px;color:#ececec;font-weight:normal;font-family:'Liberation Sans';">Longitude</div>
<svg class="b" style="left:913.5px;top:455.8px;" width="4" height="6.8" viewBox="0 0 4 6.6" fill="none" stroke="#c8c8c8" stroke-width="0.95" stroke-linecap="round" stroke-linejoin="round"><path d="M0.6 2.2 L2 0.8 L3.4 2.2 M0.6 4.4 L2 5.8 L3.4 4.4"/></svg>
<div class="t" style="left:970.00px;top:454.88px;font-size:9.0px;line-height:9.0px;color:#ececec;font-weight:normal;font-family:'Liberation Sans';">Status</div>
<svg class="b" style="left:1005.7px;top:455.8px;" width="4" height="6.8" viewBox="0 0 4 6.6" fill="none" stroke="#c8c8c8" stroke-width="0.95" stroke-linecap="round" stroke-linejoin="round"><path d="M0.6 2.2 L2 0.8 L3.4 2.2 M0.6 4.4 L2 5.8 L3.4 4.4"/></svg>
<svg class="b" style="left:272.8px;top:478.0px;" width="10" height="10" viewBox="0 0 24 24" fill="none" stroke="#ababab" stroke-width="2.2" stroke-linecap="round" stroke-linejoin="round"><path d="M20 10c0 4.99-5.54 10.19-7.4 11.8a1 1 0 0 1-1.2 0C9.54 20.19 4 14.99 4 10a8 8 0 0 1 16 0"/><circle cx="12" cy="10" r="3"/></svg>
<div class="t" style="left:289.50px;top:479.15px;font-size:9.15px;line-height:9.15px;color:#f0f0f0;font-weight:normal;font-family:'Liberation Sans';">Demo Downtown Branch</div>
<svg class="b" style="left:467.5px;top:479.8px;" width="6.5" height="6.5" viewBox="0 0 24 24" fill="none" stroke="#9a9a9a" stroke-width="2.6" stroke-linecap="round" stroke-linejoin="round"><path d="m2 7 4.4-4.4A2 2 0 0 1 7.8 2h8.4a2 2 0 0 1 1.4.6L22 7"/><path d="M4 12v8a2 2 0 0 0 2 2h12a2 2 0 0 0 2-2v-8"/><path d="M2 7h20"/><path d="M22 7v3a2 2 0 0 1-2 2 2.7 2.7 0 0 1-2-1 2.7 2.7 0 0 1-2 1 2.7 2.7 0 0 1-2-1 2.7 2.7 0 0 1-2 1 2.7 2.7 0 0 1-2-1 2.7 2.7 0 0 1-2 1 2.7 2.7 0 0 1-2-1 2.7 2.7 0 0 1-2 1 2 2 0 0 1-2-2V7"/></svg>
<div class="t" style="left:478.75px;top:479.74px;font-size:7.93px;line-height:7.93px;color:#e6e6e6;font-weight:normal;font-family:'Liberation Sans';">Demo Enterprise</div>
<div class="t" style="left:589.50px;top:480.95px;font-size:6.46px;line-height:6.46px;color:#a8a8a8;font-weight:normal;font-family:'Liberation Mono';-webkit-text-stroke:0">demo-enterprise-downtown-b…</div>
<div class="t" style="left:767.50px;top:480.51px;font-size:7.56px;line-height:7.56px;color:#b4b4b4;font-weight:normal;font-family:'Liberation Mono';-webkit-text-stroke:0">24.6408</div>
<div class="t" style="left:863.20px;top:480.51px;font-size:7.56px;line-height:7.56px;color:#b4b4b4;font-weight:normal;font-family:'Liberation Mono';-webkit-text-stroke:0">46.7728</div>
<div class="b" style="left:971px;top:475.5px;width:36px;height:14.300000000000011px;background:#f0f287;border-radius:4px"></div>
<div class="t" style="left:976.00px;top:479.24px;font-size:8.58px;line-height:8.58px;color:#121208;font-weight:bold;font-family:'Liberation Sans';-webkit-text-stroke:0;">Active</div>
<div class="b" style="left:1060.8px;top:482.3px;width:1.6000000000001364px;height:1.599999999999966px;background:#e0e0e0;border-radius:50%"></div>
<div class="b" style="left:1063.7px;top:482.3px;width:1.6000000000001364px;height:1.599999999999966px;background:#e0e0e0;border-radius:50%"></div>
<div class="b" style="left:1066.6px;top:482.3px;width:1.6000000000001364px;height:1.599999999999966px;background:#e0e0e0;border-radius:50%"></div>
<svg class="b" style="left:272.8px;top:504.25px;" width="10" height="10" viewBox="0 0 24 24" fill="none" stroke="#ababab" stroke-width="2.2" stroke-linecap="round" stroke-linejoin="round"><path d="M20 10c0 4.99-5.54 10.19-7.4 11.8a1 1 0 0 1-1.2 0C9.54 20.19 4 14.99 4 10a8 8 0 0 1 16 0"/><circle cx="12" cy="10" r="3"/></svg>
<div class="t" style="left:289.50px;top:505.40px;font-size:9.15px;line-height:9.15px;color:#f0f0f0;font-weight:normal;font-family:'Liberation Sans';">Demo Mall Branch</div>
<svg class="b" style="left:467.5px;top:506.05px;" width="6.5" height="6.5" viewBox="0 0 24 24" fill="none" stroke="#9a9a9a" stroke-width="2.6" stroke-linecap="round" stroke-linejoin="round"><path d="m2 7 4.4-4.4A2 2 0 0 1 7.8 2h8.4a2 2 0 0 1 1.4.6L22 7"/><path d="M4 12v8a2 2 0 0 0 2 2h12a2 2 0 0 0 2-2v-8"/><path d="M2 7h20"/><path d="M22 7v3a2 2 0 0 1-2 2 2.7 2.7 0 0 1-2-1 2.7 2.7 0 0 1-2 1 2.7 2.7 0 0 1-2-1 2.7 2.7 0 0 1-2 1 2.7 2.7 0 0 1-2-1 2.7 2.7 0 0 1-2 1 2.7 2.7 0 0 1-2-1 2.7 2.7 0 0 1-2 1 2 2 0 0 1-2-2V7"/></svg>
<div class="t" style="left:478.75px;top:505.99px;font-size:7.93px;line-height:7.93px;color:#e6e6e6;font-weight:normal;font-family:'Liberation Sans';">Demo Enterprise</div>
<div class="t" style="left:589.50px;top:507.20px;font-size:6.46px;line-height:6.46px;color:#a8a8a8;font-weight:normal;font-family:'Liberation Mono';-webkit-text-stroke:0">demo-enterprise-mall-branch</div>
<div class="t" style="left:767.50px;top:506.76px;font-size:7.56px;line-height:7.56px;color:#b4b4b4;font-weight:normal;font-family:'Liberation Mono';-webkit-text-stroke:0">24.6877</div>
<div class="t" style="left:863.20px;top:506.76px;font-size:7.56px;line-height:7.56px;color:#b4b4b4;font-weight:normal;font-family:'Liberation Mono';-webkit-text-stroke:0">46.6947</div>
<div class="b" style="left:971px;top:501.75px;width:36px;height:14.299999999999955px;background:#f0f287;border-radius:4px"></div>
<div class="t" style="left:976.00px;top:505.49px;font-size:8.58px;line-height:8.58px;color:#121208;font-weight:bold;font-family:'Liberation Sans';-webkit-text-stroke:0;">Active</div>
<div class="b" style="left:1060.8px;top:508.55px;width:1.6000000000001364px;height:1.599999999999966px;background:#e0e0e0;border-radius:50%"></div>
<div class="b" style="left:1063.7px;top:508.55px;width:1.6000000000001364px;height:1.599999999999966px;background:#e0e0e0;border-radius:50%"></div>
<div class="b" style="left:1066.6px;top:508.55px;width:1.6000000000001364px;height:1.599999999999966px;background:#e0e0e0;border-radius:50%"></div>
<svg class="b" style="left:272.8px;top:530.5px;" width="10" height="10" viewBox="0 0 24 24" fill="none" stroke="#ababab" stroke-width="2.2" stroke-linecap="round" stroke-linejoin="round"><path d="M20 10c0 4.99-5.54 10.19-7.4 11.8a1 1 0 0 1-1.2 0C9.54 20.19 4 14.99 4 10a8 8 0 0 1 16 0"/><circle cx="12" cy="10" r="3"/></svg>
<div class="t" style="left:289.50px;top:531.65px;font-size:9.15px;line-height:9.15px;color:#f0f0f0;font-weight:normal;font-family:'Liberation Sans';">Demo HQ Branch</div>
<svg class="b" style="left:467.5px;top:532.3px;" width="6.5" height="6.5" viewBox="0 0 24 24" fill="none" stroke="#9a9a9a" stroke-width="2.6" stroke-linecap="round" stroke-linejoin="round"><path d="m2 7 4.4-4.4A2 2 0 0 1 7.8 2h8.4a2 2 0 0 1 1.4.6L22 7"/><path d="M4 12v8a2 2 0 0 0 2 2h12a2 2 0 0 0 2-2v-8"/><path d="M2 7h20"/><path d="M22 7v3a2 2 0 0 1-2 2 2.7 2.7 0 0 1-2-1 2.7 2.7 0 0 1-2 1 2.7 2.7 0 0 1-2-1 2.7 2.7 0 0 1-2 1 2.7 2.7 0 0 1-2-1 2.7 2.7 0 0 1-2 1 2.7 2.7 0 0 1-2-1 2.7 2.7 0 0 1-2 1 2 2 0 0 1-2-2V7"/></svg>
<div class="t" style="left:478.75px;top:532.24px;font-size:7.93px;line-height:7.93px;color:#e6e6e6;font-weight:normal;font-family:'Liberation Sans';">Demo Enterprise</div>
<div class="t" style="left:589.50px;top:533.45px;font-size:6.46px;line-height:6.46px;color:#a8a8a8;font-weight:normal;font-family:'Liberation Mono';-webkit-text-stroke:0">demo-enterprise-hq-branch</div>
<div class="t" style="left:767.50px;top:533.01px;font-size:7.56px;line-height:7.56px;color:#b4b4b4;font-weight:normal;font-family:'Liberation Mono';-webkit-text-stroke:0">24.7136</div>
<div class="t" style="left:863.20px;top:533.01px;font-size:7.56px;line-height:7.56px;color:#b4b4b4;font-weight:normal;font-family:'Liberation Mono';-webkit-text-stroke:0">46.6753</div>
<div class="b" style="left:971px;top:528.0px;width:36px;height:14.299999999999955px;background:#f0f287;border-radius:4px"></div>
<div class="t" style="left:976.00px;top:531.74px;font-size:8.58px;line-height:8.58px;color:#121208;font-weight:bold;font-family:'Liberation Sans';-webkit-text-stroke:0;">Active</div>
<div class="b" style="left:1060.8px;top:534.8px;width:1.6000000000001364px;height:1.6000000000000227px;background:#e0e0e0;border-radius:50%"></div>
<div class="b" style="left:1063.7px;top:534.8px;width:1.6000000000001364px;height:1.6000000000000227px;background:#e0e0e0;border-radius:50%"></div>
<div class="b" style="left:1066.6px;top:534.8px;width:1.6000000000001364px;height:1.6000000000000227px;background:#e0e0e0;border-radius:50%"></div>
<div class="t" style="left:252.30px;top:564.02px;font-size:8.13px;line-height:8.13px;color:#8e8e8e;font-weight:normal;font-family:'Liberation Sans';">0 of 3 row(s) selected</div>
<div class="b" style="left:580px;top:561.5px;width:22px;height:4.7999999999999545px;border:1px solid #5a5a5a;border-radius:3px;box-sizing:border-box;background:#000"></div>
<div class="t" style="left:833.80px;top:562.92px;font-size:9.07px;line-height:9.07px;color:#e6e6e6;font-weight:normal;font-family:'Liberation Sans';">Rows per page</div>
<div class="t" style="left:906.00px;top:563.98px;font-size:7.82px;line-height:7.82px;color:#e6e6e6;font-weight:normal;font-family:'Liberation Sans';">10</div>
<svg class="b" style="left:922.5px;top:565px;" width="6" height="4.5" viewBox="0 0 24 24" fill="none" stroke="#6a6a6a" stroke-width="3" stroke-linecap="round" stroke-linejoin="round"><path d="m6 9 6 6 6-6"/></svg>
<div class="t" style="left:949.70px;top:563.50px;font-size:8.39px;line-height:8.39px;color:#ececec;font-weight:normal;font-family:'Liberation Sans';">Page 1 of 1</div>
<svg class="b" style="left:1010.3px;top:564px;" width="8" height="6" viewBox="0 0 8 6" fill="none" stroke="#6e6e6e" stroke-width="1.1" stroke-linecap="round" stroke-linejoin="round"><path d="M3.6 0.6 L1 3 L3.6 5.4 M7 0.6 L4.4 3 L7 5.4"/></svg>
<svg class="b" style="left:1033.5px;top:564px;" width="4" height="6" viewBox="0 0 4 6" fill="none" stroke="#6e6e6e" stroke-width="1.1" stroke-linecap="round" stroke-linejoin="round"><path d="M3.2 0.6 L0.8 3 L3.2 5.4"/></svg>
<svg class="b" style="left:1055.6px;top:564px;" width="4" height="6" viewBox="0 0 4 6" fill="none" stroke="#6e6e6e" stroke-width="1.1" stroke-linecap="round" stroke-linejoin="round"><path d="M0.8 0.6 L3.2 3 L0.8 5.4"/></svg>
<svg class="b" style="left:1075px;top:564px;" width="8" height="6" viewBox="0 0 8 6" fill="none" stroke="#6e6e6e" stroke-width="1.1" stroke-linecap="round" stroke-linejoin="round"><path d="M1 0.6 L3.6 3 L1 5.4 M4.4 0.6 L7 3 L4.4 5.4"/></svg>
</div></div>
</body></html>
